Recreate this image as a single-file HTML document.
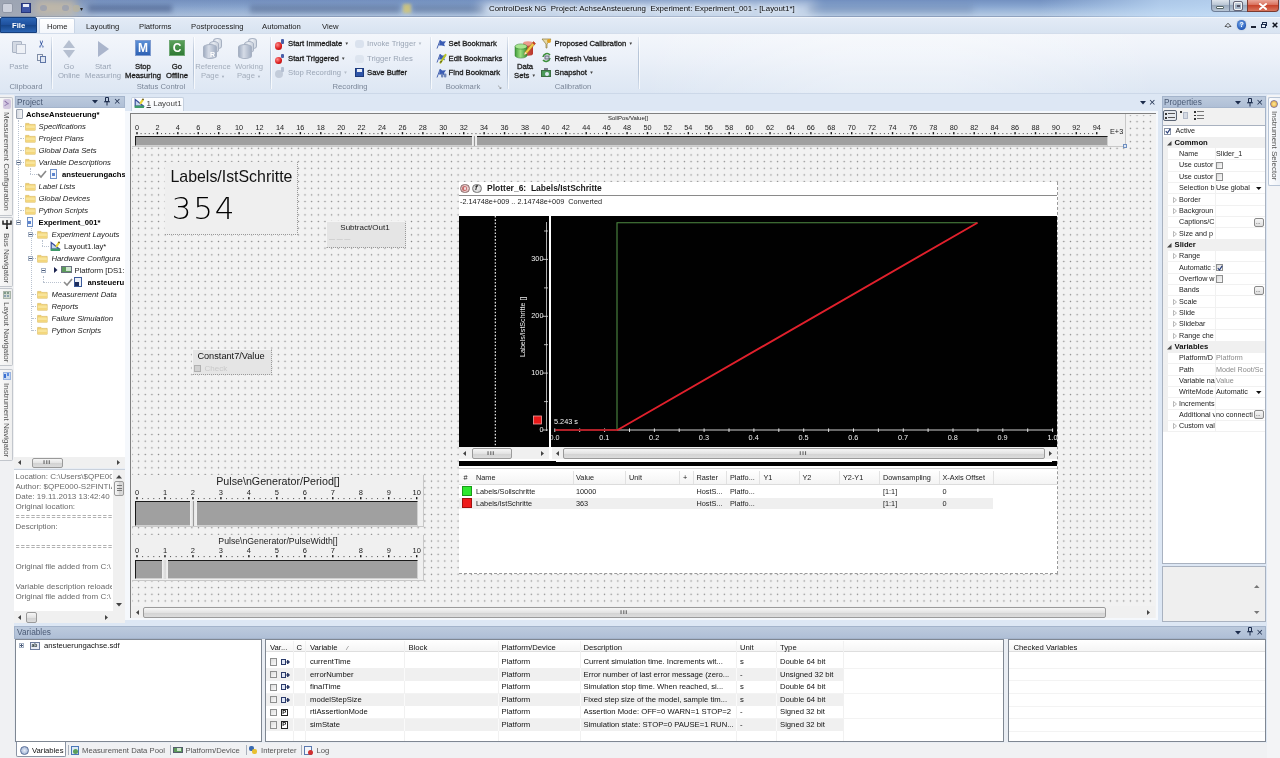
<!DOCTYPE html>
<html><head><meta charset="utf-8"><title>ControlDesk NG</title>
<style>
html,body{margin:0;padding:0;}
body{width:1280px;height:758px;overflow:hidden;position:relative;background:#dfe9f5;font-family:"Liberation Sans",sans-serif;font-size:8px;color:#1e1e1e;}
div{position:absolute;box-sizing:border-box;}
.t{white-space:nowrap;line-height:10px;font-size:8px;}
.g{color:#9aa3ad;}
.b{font-weight:bold;}
.i{font-style:italic;}
svg{position:absolute;overflow:visible;}
</style></head><body><div id="wrap" style="left:0;top:0;width:1280px;height:758px;will-change:transform;opacity:.999">
<div style="left:0px;top:0px;width:1280px;height:17px;background:linear-gradient(to bottom,#7391c1 0,#86a4cf 35%,#a3bcdc 70%,#bccfe6 100%);"></div>
<div style="left:0px;top:0px;width:700px;height:17px;background:linear-gradient(to right,rgba(160,166,178,.95) 0,rgba(160,166,178,.9) 30px,rgba(120,140,180,.25) 100px,rgba(120,140,180,.15) 300px,rgba(120,140,180,.05) 480px,rgba(120,140,180,0) 700px);"></div>
<div style="left:0px;top:15.6px;width:1280px;height:1.6px;background:rgba(110,128,160,.55);"></div>
<div style="left:36px;top:0px;width:40px;height:15px;background:rgba(206,190,160,.75);filter:blur(4px);"></div>
<div style="left:88px;top:5px;width:84px;height:7px;background:rgba(60,80,125,.55);filter:blur(2.5px);"></div>
<div style="left:250px;top:5px;width:150px;height:8px;background:rgba(70,90,130,.45);filter:blur(2.5px);"></div>
<div style="left:412px;top:5px;width:72px;height:8px;background:rgba(70,90,130,.40);filter:blur(2.5px);"></div>
<div style="left:403px;top:4px;width:8px;height:9px;background:rgba(215,200,110,.8);filter:blur(1.5px);"></div>
<div style="left:480px;top:2px;width:335px;height:13px;background:rgba(255,255,255,.55);filter:blur(6px);"></div>
<div style="left:808px;top:5px;width:165px;height:8px;background:rgba(90,110,150,.28);filter:blur(3px);"></div>
<div style="left:1040px;top:0px;width:240px;height:17px;background:linear-gradient(to right,rgba(196,222,248,0),rgba(196,222,248,.7) 50%,rgba(196,222,248,.85));"></div>
<div style="left:2px;top:3px;width:11px;height:10px;background:#d9dde6;border:1px solid #8d94a3;border-radius:2px;opacity:.8"></div>
<div style="left:21px;top:3px;width:10px;height:10px;background:#3f56a6;border:1px solid #26357a;"></div>
<div style="left:23px;top:4px;width:6px;height:3px;background:#e8ecf6;"></div>
<div style="left:40px;top:5px;width:7px;height:6px;background:#8d98b0;border-radius:3px;opacity:.6"></div>
<div style="left:62px;top:5px;width:7px;height:6px;background:#8d98b0;border-radius:3px;opacity:.6"></div>
<div style="left:73px;top:5px;width:7px;height:7px;background:#b9b49c;border-radius:3px;opacity:.7"></div>
<div class="t" style="left:80px;top:4px;font-size:6px;color:#222;">&#9662;</div>
<div class="t" style="left:489px;top:4px;font-size:7.9px;color:#0a0a0a;text-shadow:0 0 4px #fff,0 0 6px #fff;">ControlDesk NG&nbsp; Project: AchseAnsteuerung&nbsp; Experiment: Experiment_001 - [Layout1*]</div>
<div style="left:1210.5px;top:0px;width:19px;height:11.5px;background:linear-gradient(#dde4ec,#b9c5d3 45%,#9aaabd 50%,#b8c6d6);border:1px solid #6f7f98;border-top:none;border-radius:0 0 0 4px;"></div>
<div style="left:1228.5px;top:0px;width:19px;height:11.5px;background:linear-gradient(#dde4ec,#b9c5d3 45%,#9aaabd 50%,#b8c6d6);border:1px solid #6f7f98;border-top:none;"></div>
<div style="left:1246.5px;top:0px;width:32px;height:11.5px;background:linear-gradient(#e9a79a,#d9705c 45%,#c8442c 50%,#d8765e);border:1px solid #7a3a30;border-top:none;border-radius:0 0 4px 0;"></div>
<div style="left:1216px;top:5.5px;width:8px;height:3.5px;background:#fff;border:1px solid #566;border-radius:1px;"></div>
<div style="left:1234px;top:2px;width:8px;height:7.5px;border:1.6px solid #f4f4f4;outline:.8px solid #667;border-radius:1px;"></div>
<div style="left:1236.5px;top:4.7px;width:3px;height:2.5px;background:#556;"></div>
<svg style="left:1259px;top:2.5px" width="8" height="7"><path d="M1,1 L7,6 M7,1 L1,6" stroke="#fff" stroke-width="2" stroke-linecap="round"/></svg>
<div style="left:0px;top:17px;width:1280px;height:16px;background:linear-gradient(#e3ebf6,#d8e3f1);border-top:1px solid #f2f6fb;"></div>
<div style="left:0px;top:17px;width:37px;height:16px;background:linear-gradient(#2d67b7,#1d4f9c 50%,#174589 51%,#2a64b4);border:1px solid #163f7d;border-radius:2px 2px 0 0;"></div>
<div class="t" style="left:12px;top:20.7px;color:#fff;font-size:7.7px;font-weight:bold;">File</div>
<div style="left:39px;top:18px;width:36px;height:16px;background:linear-gradient(#fff,#f3f6fb);border:1px solid #c9d5e5;border-bottom:none;border-radius:2px 2px 0 0;"></div>
<div class="t" style="left:47px;top:21.8px;font-size:7.7px;color:#1c1c1c;">Home</div>
<div class="t" style="left:86px;top:21.8px;font-size:7.7px;color:#1c1c1c;">Layouting</div>
<div class="t" style="left:139px;top:21.8px;font-size:7.7px;color:#1c1c1c;">Platforms</div>
<div class="t" style="left:191px;top:21.8px;font-size:7.7px;color:#1c1c1c;">Postprocessing</div>
<div class="t" style="left:262px;top:21.8px;font-size:7.7px;color:#1c1c1c;">Automation</div>
<div class="t" style="left:322px;top:21.8px;font-size:7.7px;color:#1c1c1c;">View</div>
<svg style="left:1223.5px;top:21.5px" width="8" height="6"><path d="M1,4.5 L4,1.2 L7,4.5 L5.2,4.5 L4,5.5 L2.8,4.5 Z" fill="none" stroke="#444" stroke-width=".9"/></svg>
<div style="left:1236.5px;top:20px;width:9.5px;height:9.5px;background:radial-gradient(circle at 45% 40%,#7fb0ee,#1f55b5 70%);border-radius:5px;box-shadow:0 0 1.5px #9ab;"></div>
<div class="t" style="left:1239.6px;top:19.7px;font-size:7px;color:#fff;font-weight:bold;">?</div>
<div style="left:1251px;top:26px;width:4.5px;height:1.6px;background:#1c2233;"></div>
<div style="left:1262px;top:21.5px;width:5px;height:4px;border:1px solid #1c2c4c;border-top-width:1.6px;"></div>
<div style="left:1260.5px;top:23.5px;width:5px;height:4.5px;border:1px solid #1c2c4c;border-top-width:1.6px;background:#e8eef7;"></div>
<svg style="left:1271.5px;top:21.5px" width="6" height="6"><path d="M.7,.7 L5.3,5.3 M5.3,.7 L.7,5.3" stroke="#10141f" stroke-width="1.5"/></svg>
<div style="left:0px;top:33px;width:1280px;height:61px;background:linear-gradient(to bottom,#f3f6fb 0,#ecf1f9 22px,#e2eaf5 45px,#dce6f3 61px);border-top:1px solid #d3ddeb;border-bottom:1px solid #ccd8e8;"></div>
<div style="left:640px;top:34px;width:520px;height:59px;background:linear-gradient(to right,rgba(255,255,255,0),rgba(255,255,255,.3) 40%,rgba(255,255,255,.3) 60%,rgba(255,255,255,0));"></div>
<div style="left:51px;top:37px;width:1px;height:52px;background:linear-gradient(rgba(170,185,205,.2),#b7c5d8 30%,#b7c5d8 70%,rgba(170,185,205,.2));"></div>
<div style="left:52px;top:37px;width:1px;height:52px;background:rgba(255,255,255,.7);"></div>
<div style="left:193px;top:37px;width:1px;height:52px;background:linear-gradient(rgba(170,185,205,.2),#b7c5d8 30%,#b7c5d8 70%,rgba(170,185,205,.2));"></div>
<div style="left:194px;top:37px;width:1px;height:52px;background:rgba(255,255,255,.7);"></div>
<div style="left:269.5px;top:37px;width:1px;height:52px;background:linear-gradient(rgba(170,185,205,.2),#b7c5d8 30%,#b7c5d8 70%,rgba(170,185,205,.2));"></div>
<div style="left:270.5px;top:37px;width:1px;height:52px;background:rgba(255,255,255,.7);"></div>
<div style="left:429.5px;top:37px;width:1px;height:52px;background:linear-gradient(rgba(170,185,205,.2),#b7c5d8 30%,#b7c5d8 70%,rgba(170,185,205,.2));"></div>
<div style="left:430.5px;top:37px;width:1px;height:52px;background:rgba(255,255,255,.7);"></div>
<div style="left:507px;top:37px;width:1px;height:52px;background:linear-gradient(rgba(170,185,205,.2),#b7c5d8 30%,#b7c5d8 70%,rgba(170,185,205,.2));"></div>
<div style="left:508px;top:37px;width:1px;height:52px;background:rgba(255,255,255,.7);"></div>
<div style="left:637.5px;top:37px;width:1px;height:52px;background:linear-gradient(rgba(170,185,205,.2),#b7c5d8 30%,#b7c5d8 70%,rgba(170,185,205,.2));"></div>
<div style="left:638.5px;top:37px;width:1px;height:52px;background:rgba(255,255,255,.7);"></div>
<div class="t" style="left:-14px;top:81.7px;width:80px;text-align:center;color:#7b8799;font-size:7.7px;">Clipboard</div>
<div class="t" style="left:121px;top:81.7px;width:80px;text-align:center;color:#7b8799;font-size:7.7px;">Status Control</div>
<div class="t" style="left:310px;top:81.7px;width:80px;text-align:center;color:#7b8799;font-size:7.7px;">Recording</div>
<div class="t" style="left:423px;top:81.7px;width:80px;text-align:center;color:#7b8799;font-size:7.7px;">Bookmark</div>
<div class="t" style="left:533px;top:81.7px;width:80px;text-align:center;color:#7b8799;font-size:7.7px;">Calibration</div>
<div class="t" style="left:497px;top:82px;font-size:6px;color:#777;">&#8600;</div>
<div style="left:12px;top:41px;width:10px;height:12px;background:#d3d9e3;border:1px solid #a9b3c3;border-radius:1px;"></div>
<div style="left:16px;top:44px;width:10px;height:10px;background:#eef1f6;border:1px solid #b4bccb;"></div>
<div class="t" style="left:0px;top:61.5px;width:38px;text-align:center;color:#9aa5b5;font-size:7.7px;">Paste</div>
<div class="t" style="left:36.5px;top:37.5px;font-size:10px;color:#2a4d9b;transform:rotate(-90deg);line-height:11px;">&#9986;</div>
<div style="left:37px;top:54px;width:6px;height:7px;background:#eef1f6;border:1px solid #7f8da6;"></div>
<div style="left:40px;top:56px;width:6px;height:7px;background:#dfe6f2;border:1px solid #5f76a6;"></div>
<div class="t" style="left:39px;top:61.5px;width:60px;text-align:center;color:#9aa5b5;font-size:7.7px;">Go</div>
<div class="t" style="left:39px;top:70.5px;width:60px;text-align:center;color:#9aa5b5;font-size:7.7px;">Online</div>
<svg style="left:62px;top:39px" width="14" height="20"><polygon points="7,1 13,9 1,9" fill="#b5bfd0"/><polygon points="7,19 13,11 1,11" fill="#b5bfd0"/></svg>
<div class="t" style="left:73px;top:61.5px;width:60px;text-align:center;color:#9aa5b5;font-size:7.7px;">Start</div>
<div class="t" style="left:73px;top:70.5px;width:60px;text-align:center;color:#9aa5b5;font-size:7.7px;">Measuring</div>
<svg style="left:97px;top:40px" width="14" height="18"><polygon points="1,1 12,9 1,17" fill="#aab5cc"/></svg>
<div class="t" style="left:113px;top:61.5px;width:60px;text-align:center;color:#1c1c1c;font-size:7.7px;-webkit-text-stroke:.3px #1c1c1c;">Stop</div>
<div class="t" style="left:113px;top:70.5px;width:60px;text-align:center;color:#1c1c1c;font-size:7.7px;-webkit-text-stroke:.3px #1c1c1c;">Measuring</div>
<div style="left:135px;top:40px;width:16px;height:16px;background:linear-gradient(#5b8fd6,#2f62b4);border:1px solid #7f9cd0;"></div>
<div class="t" style="left:135px;top:41px;width:16px;text-align:center;color:#fff;font-weight:bold;font-size:12px;line-height:14px;">M</div>
<div class="t" style="left:147px;top:61.5px;width:60px;text-align:center;color:#1c1c1c;font-size:7.7px;-webkit-text-stroke:.3px #1c1c1c;">Go</div>
<div class="t" style="left:147px;top:70.5px;width:60px;text-align:center;color:#1c1c1c;font-size:7.7px;-webkit-text-stroke:.3px #1c1c1c;">Offline</div>
<div style="left:169px;top:40px;width:16px;height:16px;background:linear-gradient(#5aa05a,#2f7a35);border:1px solid #6fa874;"></div>
<div class="t" style="left:169px;top:41px;width:16px;text-align:center;color:#fff;font-weight:bold;font-size:12px;line-height:14px;">C</div>
<div style="left:213px;top:38px;width:9px;height:11px;background:linear-gradient(to right,#cfd6e1,#eef1f6 40%,#cfd6e1);border:1px solid #a7b1c2;border-radius:4.5px/3px;"></div>
<div style="left:209px;top:41px;width:10px;height:12px;background:linear-gradient(to right,#c9d0dc,#e9edf3 40%,#c9d0dc);border:1px solid #a7b1c2;border-radius:5.0px/3px;"></div>
<div style="left:203px;top:43.5px;width:14px;height:15px;background:linear-gradient(to right,#a3afc3,#d6dce7 40%,#a3afc3);border:1px solid #a7b1c2;border-radius:7.0px/3px;"></div>
<div style="left:248px;top:38px;width:9px;height:11px;background:linear-gradient(to right,#cfd6e1,#eef1f6 40%,#cfd6e1);border:1px solid #a7b1c2;border-radius:4.5px/3px;"></div>
<div style="left:244px;top:41px;width:10px;height:12px;background:linear-gradient(to right,#c9d0dc,#e9edf3 40%,#c9d0dc);border:1px solid #a7b1c2;border-radius:5.0px/3px;"></div>
<div style="left:238px;top:43.5px;width:14px;height:15px;background:linear-gradient(to right,#a3afc3,#d6dce7 40%,#a3afc3);border:1px solid #a7b1c2;border-radius:7.0px/3px;"></div>
<div class="t" style="left:210px;top:50px;font-size:7px;font-weight:bold;color:#fff;">R</div>
<div class="t" style="left:183px;top:61.5px;width:60px;text-align:center;color:#a3adbb;font-size:7.7px;">Reference</div>
<div class="t" style="left:183px;top:70.5px;width:60px;text-align:center;color:#a3adbb;font-size:7.7px;">Page <span style="font-size:4px;">&#9660;</span></div>
<div class="t" style="left:219px;top:61.5px;width:60px;text-align:center;color:#a3adbb;font-size:7.7px;">Working</div>
<div class="t" style="left:219px;top:70.5px;width:60px;text-align:center;color:#a3adbb;font-size:7.7px;">Page <span style="font-size:4px;">&#9660;</span></div>
<div style="left:274.5px;top:42px;width:7.5px;height:7.5px;background:radial-gradient(circle at 35% 35%,#ff8a8a,#d81818 60%,#9c1010);border-radius:4px;"></div>
<div style="left:281px;top:39px;width:2.5px;height:4.5px;background:#4a5fa8;border-radius:1px;"></div>
<div style="left:274.5px;top:56.5px;width:7.5px;height:7.5px;background:radial-gradient(circle at 35% 35%,#ff8a8a,#d81818 60%,#9c1010);border-radius:4px;"></div>
<div style="left:281px;top:53.5px;width:2.5px;height:4.5px;background:#4a5fa8;border-radius:1px;"></div>
<div style="left:275px;top:70px;width:8px;height:8px;background:#c3ccda;border-radius:4px;"></div>
<div style="left:281px;top:67px;width:3px;height:5px;background:#b4bfd2;border-radius:1px;"></div>
<div class="t" style="left:288px;top:39px;color:#1c1c1c;font-size:7.7px;-webkit-text-stroke:.3px #1c1c1c;">Start Immediate <span style="font-size:4.5px;color:#444;vertical-align:1px;-webkit-text-stroke:0">&#9660;</span></div>
<div class="t" style="left:288px;top:53.5px;color:#1c1c1c;font-size:7.7px;-webkit-text-stroke:.3px #1c1c1c;">Start Triggered <span style="font-size:4.5px;color:#444;vertical-align:1px;-webkit-text-stroke:0">&#9660;</span></div>
<div class="t" style="left:288px;top:68px;color:#9aa5b5;font-size:7.7px;">Stop Recording <span style="font-size:4.5px;color:#b5bdc9;vertical-align:1px;-webkit-text-stroke:0">&#9660;</span></div>
<div style="left:355px;top:40px;width:9px;height:8px;background:#c9d3e3;border-radius:3px;opacity:.55"></div>
<div style="left:355px;top:54.5px;width:9px;height:8px;background:#d2dae8;border-radius:3px;opacity:.55"></div>
<div style="left:355px;top:68px;width:9px;height:9px;background:#2f55a8;border:1px solid #1d3a7c;"></div>
<div style="left:357px;top:69px;width:5px;height:3px;background:#e8edf7;"></div>
<div class="t" style="left:367px;top:39px;color:#9aa5b5;font-size:7.7px;">Invoke Trigger <span style="font-size:4.5px;color:#b5bdc9;vertical-align:1px;-webkit-text-stroke:0">&#9660;</span></div>
<div class="t" style="left:367px;top:53.5px;color:#9aa5b5;font-size:7.7px;">Trigger Rules</div>
<div class="t" style="left:367px;top:68px;color:#1c1c1c;font-size:7.7px;-webkit-text-stroke:.3px #1c1c1c;">Save Buffer</div>
<svg style="left:435.5px;top:38.5px" width="11" height="10"><path d="M1,9.5 L4.2,1" stroke="#4a66b0" stroke-width="1" fill="none"/><path d="M4.2,1 L6.2,2.6 L10,2.2 L8,5 L9,7.2 L5.6,6.4 L3,6.6 Z" fill="#3a5cb4"/></svg>
<svg style="left:435.5px;top:53.0px" width="11" height="10"><path d="M1,9.5 L4.2,1" stroke="#4a66b0" stroke-width="1" fill="none"/><path d="M4.2,1 L6.2,2.6 L10,2.2 L8,5 L9,7.2 L5.6,6.4 L3,6.6 Z" fill="#3a5cb4"/><path d="M4.5,9.5 L9.5,2" stroke="#b7c22a" stroke-width="2.2" stroke-linecap="round"/><path d="M4.5,9.5 L5.5,8" stroke="#4a4a2a" stroke-width="1.2"/></svg>
<svg style="left:435.5px;top:67.5px" width="11" height="10"><path d="M1,9.5 L4.2,1" stroke="#4a66b0" stroke-width="1" fill="none"/><path d="M4.2,1 L6.2,2.6 L10,2.2 L8,5 L9,7.2 L5.6,6.4 L3,6.6 Z" fill="#3a5cb4"/><rect x="5" y="5.5" width="2.4" height="4" rx="1" fill="#6f86b8"/><rect x="8" y="5.5" width="2.4" height="4" rx="1" fill="#6f86b8"/></svg>
<div class="t" style="left:448.5px;top:39px;color:#1c1c1c;font-size:7.7px;-webkit-text-stroke:.3px #1c1c1c;">Set Bookmark</div>
<div class="t" style="left:448.5px;top:53.5px;color:#1c1c1c;font-size:7.7px;-webkit-text-stroke:.3px #1c1c1c;">Edit Bookmarks</div>
<div class="t" style="left:448.5px;top:68px;color:#1c1c1c;font-size:7.7px;-webkit-text-stroke:.3px #1c1c1c;">Find Bookmark</div>
<svg style="left:514px;top:39px" width="23" height="20"><defs><linearGradient id="gcy" x1="0" x2="1"><stop offset="0" stop-color="#3f9a3a"/><stop offset=".45" stop-color="#9be07e"/><stop offset="1" stop-color="#3a8a36"/></linearGradient><linearGradient id="rcy" x1="0" x2="1"><stop offset="0" stop-color="#d96a5a"/><stop offset="1" stop-color="#b8352a"/></linearGradient></defs><path d="M9,4.5 v10 a5,2.2 0 0 0 10,0 v-10 z" fill="url(#rcy)"/><ellipse cx="14" cy="4.5" rx="5" ry="2.2" fill="#eb9a8c"/><path d="M1,7.5 v9 a6,2.6 0 0 0 12,0 v-9 z" fill="url(#gcy)" stroke="#2f7a2c" stroke-width=".5"/><ellipse cx="7" cy="7.5" rx="6" ry="2.6" fill="#a8e690" stroke="#2f7a2c" stroke-width=".5"/><path d="M19.5,2.5 L21.5,4.5 L13,14.5 L10.3,15.8 L11,13 Z" fill="#f0c848" stroke="#9a7418" stroke-width=".5"/><path d="M19.5,2.5 L21.5,4.5 L20.3,6 L18.3,4 Z" fill="#c8382c"/><path d="M10.3,15.8 L11,13 L13,14.5 Z" fill="#f6ead0"/></svg>
<div class="t" style="left:505px;top:61.5px;width:40px;text-align:center;font-size:7.7px;-webkit-text-stroke:.3px #1c1c1c;">Data</div>
<div class="t" style="left:505px;top:70.5px;width:40px;text-align:center;font-size:7.7px;-webkit-text-stroke:.3px #1c1c1c;">Sets <span style="font-size:4.5px;color:#444;vertical-align:1px;-webkit-text-stroke:0">&#9660;</span></div>
<svg style="left:541px;top:38px" width="11" height="11"><polygon points="1,1 10,1 6,6 6,10 5,10 5,6" fill="#e5d9a4" stroke="#8c7a3a" stroke-width=".7"/><circle cx="8" cy="3" r="2" fill="#e0a020"/></svg>
<svg style="left:541px;top:52px" width="11" height="11"><path d="M2,5 A4,4 0 0 1 9,3 M9,6 A4,4 0 0 1 2,8" stroke="#3b8f3b" stroke-width="1.6" fill="none"/><rect x="4" y="4" width="4" height="3" fill="#c9d3e2" stroke="#667"/></svg>
<div style="left:541px;top:70px;width:10px;height:7px;background:#4a9a58;border:1px solid #3b6e43;"></div>
<div style="left:544px;top:68px;width:4px;height:2px;background:#778;"></div>
<div style="left:544.5px;top:71.5px;width:4px;height:4px;background:#dfe8f5;border-radius:2px;"></div>
<div class="t" style="left:554.5px;top:39px;color:#1c1c1c;font-size:7.7px;-webkit-text-stroke:.3px #1c1c1c;">Proposed Calibration <span style="font-size:4.5px;color:#444;vertical-align:1px;-webkit-text-stroke:0">&#9660;</span></div>
<div class="t" style="left:554.5px;top:53.5px;color:#1c1c1c;font-size:7.7px;-webkit-text-stroke:.3px #1c1c1c;">Refresh Values</div>
<div class="t" style="left:554.5px;top:68px;color:#1c1c1c;font-size:7.7px;-webkit-text-stroke:.3px #1c1c1c;">Snapshot <span style="font-size:4.5px;color:#444;vertical-align:1px;-webkit-text-stroke:0">&#9660;</span></div>
<div style="left:0px;top:94px;width:1280px;height:664px;background:#dde7f4;"></div>
<div style="left:0px;top:95px;width:14px;height:663px;background:#f0f1f3;"></div>
<div style="left:0px;top:97px;width:13px;height:119px;background:linear-gradient(to right,#f8f8f8,#efefef);border:1px solid #c2c6cc;border-left:none;border-radius:0 2px 2px 0;"></div>
<div class="t" style="left:11px;top:112px;transform-origin:0 0;transform:rotate(90deg);color:#555;font-size:8px;">Measurement Configuration</div>
<div style="left:2.5px;top:99px;width:8px;height:10px;background:#cdbfdc;border-radius:2px;opacity:.85;"></div><div style="left:4px;top:102px;width:5px;height:1px;background:#8a70a8;transform:rotate(40deg);"></div><div style="left:4px;top:104px;width:5px;height:1px;background:#9a86b8;transform:rotate(-35deg);"></div>
<div style="left:0px;top:217px;width:13px;height:70px;background:linear-gradient(to right,#f8f8f8,#efefef);border:1px solid #c2c6cc;border-left:none;border-radius:0 2px 2px 0;"></div>
<div class="t" style="left:11px;top:233px;transform-origin:0 0;transform:rotate(90deg);color:#555;font-size:8px;">Bus Navigator</div>
<svg style="left:2px;top:219px" width="10" height="10"><path d="M1,1.5 V5 H9 V1.5 M5,1 V5 M5,5 V8.5" stroke="#222" stroke-width="1.5" fill="none"/><rect x="4" y="8" width="2" height="2" fill="#222"/></svg>
<div style="left:0px;top:288px;width:13px;height:78px;background:linear-gradient(to right,#f8f8f8,#efefef);border:1px solid #c2c6cc;border-left:none;border-radius:0 2px 2px 0;"></div>
<div class="t" style="left:11px;top:302px;transform-origin:0 0;transform:rotate(90deg);color:#555;font-size:8px;">Layout Navigator</div>
<div style="left:2.5px;top:290.5px;width:8px;height:8px;background:#cfd8cf;border:1px solid #a9b5a9;"></div><div style="left:4px;top:292px;width:2px;height:2px;background:#7f9a8a;"></div><div style="left:7px;top:292px;width:2px;height:2px;background:#7f9a8a;"></div><div style="left:4px;top:295px;width:2px;height:2px;background:#8aa0b0;"></div><div style="left:7px;top:295px;width:2px;height:2px;background:#8aa0b0;"></div>
<div style="left:0px;top:369px;width:13px;height:92px;background:linear-gradient(to right,#f8f8f8,#efefef);border:1px solid #c2c6cc;border-left:none;border-radius:0 2px 2px 0;"></div>
<div class="t" style="left:11px;top:383px;transform-origin:0 0;transform:rotate(90deg);color:#555;font-size:8px;">Instrument Navigator</div>
<div style="left:2.5px;top:372px;width:8px;height:8px;background:#c9daf2;border:1px solid #9ab4e0;"></div><div style="left:4px;top:374px;width:2px;height:4px;background:#3b6fd0;"></div><div style="left:7px;top:373px;width:2px;height:3px;background:#5a8ae0;"></div>
<div style="left:14.5px;top:96.3px;width:110px;height:11.7px;background:linear-gradient(#bccadd,#afbfd6);border:1px solid #a4b4cb;"></div>
<div class="t" style="left:17px;top:97.2px;font-size:8.3px;color:#4a5a75;">Project</div>
<svg style="left:92px;top:100px" width="7" height="4"><polygon points="0,0 6,0 3,3.5" fill="#1c2c4c"/></svg>
<svg style="left:104px;top:97px" width="6" height="9"><path d="M1.5,0.5 h3 v4 h-3 z M0,4.8 h6 M3,5 v3.5" stroke="#1c2c4c" fill="none" stroke-width="1"/></svg>
<div class="t" style="left:114px;top:95px;font-size:11px;color:#1c2c4c;line-height:12px;">&#215;</div>
<div style="left:14px;top:108px;width:111px;height:349px;background:#fff;"></div>
<div style="left:18px;top:120px;width:1px;height:102px;border-left:1px dotted #b9c2cf;"></div>
<div style="left:30.5px;top:228px;width:1px;height:103px;border-left:1px dotted #b9c2cf;"></div>
<div class="t" style="left:26px;top:109.6px;font-weight:bold;color:#000;font-size:7.7px;width:99px;overflow:hidden;">AchseAnsteuerung*</div>
<div style="left:16px;top:109px;width:7px;height:10px;background:linear-gradient(to right,#d5d9e0,#f4f5f7);border:1px solid #9aa2b0;border-radius:1px;"></div>
<div class="t" style="left:38.5px;top:121.6px;font-style:italic;color:#222;font-size:7.7px;width:86.5px;overflow:hidden;">Specifications</div>
<svg style="left:24.5px;top:121.5px" width="11" height="9"><path d="M.6,1.4 h3.4 l1,1 h5.2 v5.8 h-9.6 z" fill="#f0cf6e" stroke="#d8b75a" stroke-width=".6"/><path d="M.9,3.4 h9 v4.5 h-9 z" fill="#f8e49a"/><path d="M.9,6 h9 v1.9 h-9 z" fill="#f3d67c"/></svg>
<div style="left:19.5px;top:126px;width:4px;height:1px;border-top:1px dotted #b9c2cf;"></div>
<div class="t" style="left:38.5px;top:133.6px;font-style:italic;color:#222;font-size:7.7px;width:86.5px;overflow:hidden;">Project Plans</div>
<svg style="left:24.5px;top:133.5px" width="11" height="9"><path d="M.6,1.4 h3.4 l1,1 h5.2 v5.8 h-9.6 z" fill="#f0cf6e" stroke="#d8b75a" stroke-width=".6"/><path d="M.9,3.4 h9 v4.5 h-9 z" fill="#f8e49a"/><path d="M.9,6 h9 v1.9 h-9 z" fill="#f3d67c"/></svg>
<div style="left:19.5px;top:138px;width:4px;height:1px;border-top:1px dotted #b9c2cf;"></div>
<div class="t" style="left:38.5px;top:145.6px;font-style:italic;color:#222;font-size:7.7px;width:86.5px;overflow:hidden;">Global Data Sets</div>
<svg style="left:24.5px;top:145.5px" width="11" height="9"><path d="M.6,1.4 h3.4 l1,1 h5.2 v5.8 h-9.6 z" fill="#f0cf6e" stroke="#d8b75a" stroke-width=".6"/><path d="M.9,3.4 h9 v4.5 h-9 z" fill="#f8e49a"/><path d="M.9,6 h9 v1.9 h-9 z" fill="#f3d67c"/></svg>
<div style="left:19.5px;top:150px;width:4px;height:1px;border-top:1px dotted #b9c2cf;"></div>
<div class="t" style="left:38.5px;top:157.6px;font-style:italic;color:#222;font-size:7.7px;width:86.5px;overflow:hidden;">Variable Descriptions</div>
<svg style="left:24.5px;top:157.5px" width="11" height="9"><path d="M.6,1.4 h3.4 l1,1 h5.2 v5.8 h-9.6 z" fill="#f0cf6e" stroke="#d8b75a" stroke-width=".6"/><path d="M.9,3.4 h9 v4.5 h-9 z" fill="#f8e49a"/><path d="M.9,6 h9 v1.9 h-9 z" fill="#f3d67c"/></svg>
<div style="left:19.5px;top:162px;width:4px;height:1px;border-top:1px dotted #b9c2cf;"></div>
<div style="left:15.5px;top:159.5px;width:5px;height:5px;border:1px solid #a6b2c4;background:#fff;"></div><div style="left:16.5px;top:161.5px;width:3px;height:1px;background:#4a5a78;"></div>
<div class="t" style="left:62px;top:169.6px;font-weight:bold;color:#000;font-size:7.7px;width:63px;overflow:hidden;">ansteuerungachs</div>
<svg style="left:37px;top:170px" width="10" height="8"><path d="M1,4 L4,7 L9,1" stroke="#8a8a8a" stroke-width="1.6" fill="none"/></svg>
<div style="left:50px;top:169px;width:7px;height:10px;background:#f4f7fc;border:1px solid #6f8fc6;"></div>
<div style="left:52px;top:173px;width:3px;height:3px;background:#5b84cf;"></div>
<div style="left:30px;top:168px;width:1px;height:6px;border-left:1px dotted #b9c2cf;"></div><div style="left:30px;top:174px;width:7px;height:1px;border-top:1px dotted #b9c2cf;"></div>
<div class="t" style="left:38.5px;top:181.6px;font-style:italic;color:#222;font-size:7.7px;width:86.5px;overflow:hidden;">Label Lists</div>
<svg style="left:24.5px;top:181.5px" width="11" height="9"><path d="M.6,1.4 h3.4 l1,1 h5.2 v5.8 h-9.6 z" fill="#f0cf6e" stroke="#d8b75a" stroke-width=".6"/><path d="M.9,3.4 h9 v4.5 h-9 z" fill="#f8e49a"/><path d="M.9,6 h9 v1.9 h-9 z" fill="#f3d67c"/></svg>
<div style="left:19.5px;top:186px;width:4px;height:1px;border-top:1px dotted #b9c2cf;"></div>
<div class="t" style="left:38.5px;top:193.6px;font-style:italic;color:#222;font-size:7.7px;width:86.5px;overflow:hidden;">Global Devices</div>
<svg style="left:24.5px;top:193.5px" width="11" height="9"><path d="M.6,1.4 h3.4 l1,1 h5.2 v5.8 h-9.6 z" fill="#f0cf6e" stroke="#d8b75a" stroke-width=".6"/><path d="M.9,3.4 h9 v4.5 h-9 z" fill="#f8e49a"/><path d="M.9,6 h9 v1.9 h-9 z" fill="#f3d67c"/></svg>
<div style="left:19.5px;top:198px;width:4px;height:1px;border-top:1px dotted #b9c2cf;"></div>
<div class="t" style="left:38.5px;top:205.6px;font-style:italic;color:#222;font-size:7.7px;width:86.5px;overflow:hidden;">Python Scripts</div>
<svg style="left:24.5px;top:205.5px" width="11" height="9"><path d="M.6,1.4 h3.4 l1,1 h5.2 v5.8 h-9.6 z" fill="#f0cf6e" stroke="#d8b75a" stroke-width=".6"/><path d="M.9,3.4 h9 v4.5 h-9 z" fill="#f8e49a"/><path d="M.9,6 h9 v1.9 h-9 z" fill="#f3d67c"/></svg>
<div style="left:19.5px;top:210px;width:4px;height:1px;border-top:1px dotted #b9c2cf;"></div>
<div class="t" style="left:38.5px;top:217.6px;font-weight:bold;color:#000;font-size:7.7px;width:86.5px;overflow:hidden;">Experiment_001*</div>
<div style="left:15.5px;top:219.5px;width:5px;height:5px;border:1px solid #a6b2c4;background:#fff;"></div><div style="left:16.5px;top:221.5px;width:3px;height:1px;background:#4a5a78;"></div>
<div style="left:26.5px;top:217px;width:6px;height:10px;background:#f4f7fc;border:1px solid #6f8fc6;"></div>
<div style="left:28px;top:221px;width:3px;height:3px;background:#5b84cf;"></div>
<div class="t" style="left:51.5px;top:229.6px;font-style:italic;color:#222;font-size:7.7px;width:73.5px;overflow:hidden;">Experiment Layouts</div>
<svg style="left:37px;top:229.5px" width="11" height="9"><path d="M.6,1.4 h3.4 l1,1 h5.2 v5.8 h-9.6 z" fill="#f0cf6e" stroke="#d8b75a" stroke-width=".6"/><path d="M.9,3.4 h9 v4.5 h-9 z" fill="#f8e49a"/><path d="M.9,6 h9 v1.9 h-9 z" fill="#f3d67c"/></svg>
<div style="left:32px;top:234px;width:4px;height:1px;border-top:1px dotted #b9c2cf;"></div>
<div style="left:28px;top:231.5px;width:5px;height:5px;border:1px solid #a6b2c4;background:#fff;"></div><div style="left:29px;top:233.5px;width:3px;height:1px;background:#4a5a78;"></div>
<div class="t" style="left:64px;top:241.6px;color:#222;font-size:7.7px;width:61px;overflow:hidden;">Layout1.lay*</div>
<svg style="left:50px;top:241px" width="11" height="10"><polygon points="1.2,1.6 1.2,8 9.3,8" fill="#c4d6ee" stroke="#3a4f9a" stroke-width="1.2"/><rect x=".6" y="7.6" width="9.4" height="2.4" fill="#3f9a6a"/><path d="M6.6,5.2 L8.8,1.8" stroke="#ecd63a" stroke-width="2.2" stroke-linecap="round"/><circle cx="9" cy="1.4" r=".8" fill="#5a4a1a"/></svg>
<div style="left:42px;top:240px;width:1px;height:6px;border-left:1px dotted #b9c2cf;"></div><div style="left:42px;top:246px;width:7px;height:1px;border-top:1px dotted #b9c2cf;"></div>
<div class="t" style="left:51.5px;top:253.6px;font-style:italic;color:#222;font-size:7.7px;width:73.5px;overflow:hidden;">Hardware Configura</div>
<svg style="left:37px;top:253.5px" width="11" height="9"><path d="M.6,1.4 h3.4 l1,1 h5.2 v5.8 h-9.6 z" fill="#f0cf6e" stroke="#d8b75a" stroke-width=".6"/><path d="M.9,3.4 h9 v4.5 h-9 z" fill="#f8e49a"/><path d="M.9,6 h9 v1.9 h-9 z" fill="#f3d67c"/></svg>
<div style="left:32px;top:258px;width:4px;height:1px;border-top:1px dotted #b9c2cf;"></div>
<div style="left:28px;top:255.5px;width:5px;height:5px;border:1px solid #a6b2c4;background:#fff;"></div><div style="left:29px;top:257.5px;width:3px;height:1px;background:#4a5a78;"></div>
<div class="t" style="left:74.5px;top:265.6px;color:#222;font-size:7.7px;width:50.5px;overflow:hidden;">Platform [DS1:</div>
<div style="left:41px;top:267.5px;width:5px;height:5px;border:1px solid #a6b2c4;background:#fff;"></div><div style="left:42px;top:269.5px;width:3px;height:1px;background:#4a5a78;"></div>
<svg style="left:54px;top:267px" width="4" height="6"><polygon points="0,0 3.5,3 0,6" fill="#1c2450"/></svg>
<div style="left:61px;top:266px;width:11px;height:7px;background:#5d9a5d;border:1px solid #6b7280;"></div>
<div style="left:66px;top:267px;width:5px;height:4px;background:#cfe6cf;"></div>
<div class="t" style="left:87.5px;top:277.6px;font-weight:bold;color:#000;font-size:7.7px;width:37.5px;overflow:hidden;">ansteueru</div>
<svg style="left:63px;top:278px" width="10" height="8"><path d="M1,4 L4,7 L9,1" stroke="#8a8a8a" stroke-width="1.6" fill="none"/></svg>
<div style="left:74px;top:277px;width:8px;height:10px;background:#eef2f9;border:1px solid #3b5a9a;"></div>
<div style="left:75px;top:282px;width:4px;height:4px;background:#1d2d5c;"></div>
<div style="left:43px;top:276px;width:1px;height:6px;border-left:1px dotted #b9c2cf;"></div><div style="left:43px;top:282px;width:18px;height:1px;border-top:1px dotted #b9c2cf;"></div>
<div class="t" style="left:51.5px;top:289.6px;font-style:italic;color:#222;font-size:7.7px;width:73.5px;overflow:hidden;">Measurement Data</div>
<svg style="left:37px;top:289.5px" width="11" height="9"><path d="M.6,1.4 h3.4 l1,1 h5.2 v5.8 h-9.6 z" fill="#f0cf6e" stroke="#d8b75a" stroke-width=".6"/><path d="M.9,3.4 h9 v4.5 h-9 z" fill="#f8e49a"/><path d="M.9,6 h9 v1.9 h-9 z" fill="#f3d67c"/></svg>
<div style="left:32px;top:294px;width:4px;height:1px;border-top:1px dotted #b9c2cf;"></div>
<div class="t" style="left:51.5px;top:301.6px;font-style:italic;color:#222;font-size:7.7px;width:73.5px;overflow:hidden;">Reports</div>
<svg style="left:37px;top:301.5px" width="11" height="9"><path d="M.6,1.4 h3.4 l1,1 h5.2 v5.8 h-9.6 z" fill="#f0cf6e" stroke="#d8b75a" stroke-width=".6"/><path d="M.9,3.4 h9 v4.5 h-9 z" fill="#f8e49a"/><path d="M.9,6 h9 v1.9 h-9 z" fill="#f3d67c"/></svg>
<div style="left:32px;top:306px;width:4px;height:1px;border-top:1px dotted #b9c2cf;"></div>
<div class="t" style="left:51.5px;top:313.6px;font-style:italic;color:#222;font-size:7.7px;width:73.5px;overflow:hidden;">Failure Simulation</div>
<svg style="left:37px;top:313.5px" width="11" height="9"><path d="M.6,1.4 h3.4 l1,1 h5.2 v5.8 h-9.6 z" fill="#f0cf6e" stroke="#d8b75a" stroke-width=".6"/><path d="M.9,3.4 h9 v4.5 h-9 z" fill="#f8e49a"/><path d="M.9,6 h9 v1.9 h-9 z" fill="#f3d67c"/></svg>
<div style="left:32px;top:318px;width:4px;height:1px;border-top:1px dotted #b9c2cf;"></div>
<div class="t" style="left:51.5px;top:325.6px;font-style:italic;color:#222;font-size:7.7px;width:73.5px;overflow:hidden;">Python Scripts</div>
<svg style="left:37px;top:325.5px" width="11" height="9"><path d="M.6,1.4 h3.4 l1,1 h5.2 v5.8 h-9.6 z" fill="#f0cf6e" stroke="#d8b75a" stroke-width=".6"/><path d="M.9,3.4 h9 v4.5 h-9 z" fill="#f8e49a"/><path d="M.9,6 h9 v1.9 h-9 z" fill="#f3d67c"/></svg>
<div style="left:32px;top:330px;width:4px;height:1px;border-top:1px dotted #b9c2cf;"></div>
<div style="left:14px;top:457px;width:111px;height:11px;background:#f0f0f0;"></div><div style="left:32px;top:457.5px;width:31px;height:10px;background:linear-gradient(#f6f6f6,#e3e3e3 50%,#d2d2d2 51%,#dcdcdc);border:1px solid #9a9a9a;border-radius:2px;"></div><div class="t" style="left:32px;top:456px;width:31px;text-align:center;font-size:3px;letter-spacing:.5px;color:#666;line-height:13px;">&#9612;&#9612;&#9612;</div><svg style="left:18px;top:460.0px" width="4" height="5"><polygon points="3,0 3,5 0,2.5" fill="#444"/></svg><svg style="left:117px;top:460.0px" width="4" height="5"><polygon points="0,0 0,5 3,2.5" fill="#444"/></svg>
<div style="left:14px;top:468px;width:111px;height:2px;background:#e8edf4;border-bottom:1px solid #c9d1dc;"></div>
<div style="left:14px;top:470px;width:99px;height:141px;background:#fff;"></div>
<div class="t" style="left:15.5px;top:472px;color:#6a6a6a;font-size:8px;width:96.5px;overflow:hidden;">Location: C:\Users\$QPE000</div>
<div class="t" style="left:15.5px;top:482px;color:#6a6a6a;font-size:8px;width:96.5px;overflow:hidden;">Author: $QPE000-S2FINTIA1</div>
<div class="t" style="left:15.5px;top:492px;color:#6a6a6a;font-size:8px;width:96.5px;overflow:hidden;">Date: 19.11.2013 13:42:40</div>
<div class="t" style="left:15.5px;top:502px;color:#6a6a6a;font-size:8px;width:96.5px;overflow:hidden;">Original location:</div>
<div class="t" style="left:15.5px;top:512px;color:#6a6a6a;font-size:8px;width:96.5px;overflow:hidden;letter-spacing:-.45px;font-size:7px;">= = = = = = = = = = = = = = = = = = =</div>
<div class="t" style="left:15.5px;top:522px;color:#6a6a6a;font-size:8px;width:96.5px;overflow:hidden;">Description:</div>
<div class="t" style="left:15.5px;top:542px;color:#6a6a6a;font-size:8px;width:96.5px;overflow:hidden;letter-spacing:-.45px;font-size:7px;">= = = = = = = = = = = = = = = = = = =</div>
<div class="t" style="left:15.5px;top:562px;color:#6a6a6a;font-size:8px;width:96.5px;overflow:hidden;">Original file added from C:\</div>
<div class="t" style="left:15.5px;top:582px;color:#6a6a6a;font-size:8px;width:96.5px;overflow:hidden;">Variable description reloade</div>
<div class="t" style="left:15.5px;top:592px;color:#6a6a6a;font-size:8px;width:96.5px;overflow:hidden;">Original file added from C:\</div>
<div style="left:113px;top:470px;width:12px;height:141px;background:#f0f0f0;"></div>
<div style="left:114px;top:481px;width:10px;height:15px;background:linear-gradient(to right,#f6f6f6,#e3e3e3 50%,#d2d2d2 51%,#dcdcdc);border:1px solid #9a9a9a;border-radius:2px;"></div>
<div style="left:116.5px;top:485px;width:5px;height:1px;background:#777;"></div><div style="left:116.5px;top:487.5px;width:5px;height:1px;background:#777;"></div><div style="left:116.5px;top:490px;width:5px;height:1px;background:#777;"></div>
<svg style="left:116px;top:475px" width="6" height="4"><polygon points="0,3.5 6,3.5 3,0" fill="#444"/></svg>
<svg style="left:116px;top:603px" width="6" height="4"><polygon points="0,0 6,0 3,3.5" fill="#444"/></svg>
<div style="left:14px;top:611px;width:99px;height:12px;background:#f0f0f0;"></div><div style="left:26px;top:611.5px;width:11px;height:11px;background:linear-gradient(#f6f6f6,#e3e3e3 50%,#d2d2d2 51%,#dcdcdc);border:1px solid #9a9a9a;border-radius:2px;"></div><svg style="left:18px;top:614.5px" width="4" height="5"><polygon points="3,0 3,5 0,2.5" fill="#444"/></svg><svg style="left:105px;top:614.5px" width="4" height="5"><polygon points="0,0 0,5 3,2.5" fill="#444"/></svg>
<div style="left:113px;top:611px;width:12px;height:12px;background:#f0f0f0;"></div>
<div style="left:131px;top:96.5px;width:52.5px;height:14.5px;background:linear-gradient(#fdfeff,#f5f8fc);border:1px solid #c6d1e0;border-bottom:none;border-radius:2px 2px 0 0;"></div>
<svg style="left:134px;top:98px" width="11" height="10"><polygon points="1.2,1.6 1.2,8 9.3,8" fill="#c4d6ee" stroke="#3a4f9a" stroke-width="1.2"/><rect x=".6" y="7.6" width="9.4" height="2.4" fill="#3f9a6a"/><path d="M6.6,5.2 L8.8,1.8" stroke="#ecd63a" stroke-width="2.2" stroke-linecap="round"/><circle cx="9" cy="1.4" r=".8" fill="#5a4a1a"/></svg>
<div class="t" style="left:146.5px;top:98.5px;font-size:8px;color:#444;"><u>1</u> Layout1</div>
<svg style="left:1140px;top:101px" width="7" height="4"><polygon points="0,0 6,0 3,3.5" fill="#1c2c4c"/></svg>
<div class="t" style="left:1149px;top:96px;font-size:11px;color:#1c2c4c;line-height:12px;">&#215;</div>
<div style="left:124.5px;top:110.7px;width:1033px;height:509px;background:#f5f8fc;"></div>
<div style="left:130.2px;top:113.3px;width:1025.5px;height:504.7px;background-color:#f2f2f2;border-top:1.4px solid #808080;border-left:1.4px solid #808080;"></div>
<div style="left:131.5px;top:114.5px;width:1023.5px;height:491.5px;background-image:radial-gradient(circle at 3.333px 3.333px,#868686 0,#868686 .55px,rgba(242,242,242,0) 1.05px);background-size:6.6667px 6.6667px;background-position:-3.4px -3.3px;"></div>
<div style="left:131.5px;top:114px;width:994.5px;height:33px;background:#f0f0f0;border-bottom:1px solid #c8c8c8;border-right:1px solid #c8c8c8;"></div><div class="t" style="left:598px;top:115px;width:60px;text-align:center;font-size:6px;color:#222;line-height:7px;">SollPos/Value[]</div><div class="t" style="left:127.0px;top:122.5px;width:20px;text-align:center;font-size:7.3px;color:#222;">0</div><div class="t" style="left:147.42000000000002px;top:122.5px;width:20px;text-align:center;font-size:7.3px;color:#222;">2</div><div class="t" style="left:167.84px;top:122.5px;width:20px;text-align:center;font-size:7.3px;color:#222;">4</div><div class="t" style="left:188.26px;top:122.5px;width:20px;text-align:center;font-size:7.3px;color:#222;">6</div><div class="t" style="left:208.68px;top:122.5px;width:20px;text-align:center;font-size:7.3px;color:#222;">8</div><div class="t" style="left:229.10000000000002px;top:122.5px;width:20px;text-align:center;font-size:7.3px;color:#222;">10</div><div class="t" style="left:249.51999999999998px;top:122.5px;width:20px;text-align:center;font-size:7.3px;color:#222;">12</div><div class="t" style="left:269.94px;top:122.5px;width:20px;text-align:center;font-size:7.3px;color:#222;">14</div><div class="t" style="left:290.36px;top:122.5px;width:20px;text-align:center;font-size:7.3px;color:#222;">16</div><div class="t" style="left:310.78000000000003px;top:122.5px;width:20px;text-align:center;font-size:7.3px;color:#222;">18</div><div class="t" style="left:331.20000000000005px;top:122.5px;width:20px;text-align:center;font-size:7.3px;color:#222;">20</div><div class="t" style="left:351.62px;top:122.5px;width:20px;text-align:center;font-size:7.3px;color:#222;">22</div><div class="t" style="left:372.04px;top:122.5px;width:20px;text-align:center;font-size:7.3px;color:#222;">24</div><div class="t" style="left:392.46000000000004px;top:122.5px;width:20px;text-align:center;font-size:7.3px;color:#222;">26</div><div class="t" style="left:412.88px;top:122.5px;width:20px;text-align:center;font-size:7.3px;color:#222;">28</div><div class="t" style="left:433.3px;top:122.5px;width:20px;text-align:center;font-size:7.3px;color:#222;">30</div><div class="t" style="left:453.72px;top:122.5px;width:20px;text-align:center;font-size:7.3px;color:#222;">32</div><div class="t" style="left:474.14000000000004px;top:122.5px;width:20px;text-align:center;font-size:7.3px;color:#222;">34</div><div class="t" style="left:494.56000000000006px;top:122.5px;width:20px;text-align:center;font-size:7.3px;color:#222;">36</div><div class="t" style="left:514.98px;top:122.5px;width:20px;text-align:center;font-size:7.3px;color:#222;">38</div><div class="t" style="left:535.4000000000001px;top:122.5px;width:20px;text-align:center;font-size:7.3px;color:#222;">40</div><div class="t" style="left:555.82px;top:122.5px;width:20px;text-align:center;font-size:7.3px;color:#222;">42</div><div class="t" style="left:576.24px;top:122.5px;width:20px;text-align:center;font-size:7.3px;color:#222;">44</div><div class="t" style="left:596.6600000000001px;top:122.5px;width:20px;text-align:center;font-size:7.3px;color:#222;">46</div><div class="t" style="left:617.08px;top:122.5px;width:20px;text-align:center;font-size:7.3px;color:#222;">48</div><div class="t" style="left:637.5px;top:122.5px;width:20px;text-align:center;font-size:7.3px;color:#222;">50</div><div class="t" style="left:657.9200000000001px;top:122.5px;width:20px;text-align:center;font-size:7.3px;color:#222;">52</div><div class="t" style="left:678.34px;top:122.5px;width:20px;text-align:center;font-size:7.3px;color:#222;">54</div><div class="t" style="left:698.76px;top:122.5px;width:20px;text-align:center;font-size:7.3px;color:#222;">56</div><div class="t" style="left:719.1800000000001px;top:122.5px;width:20px;text-align:center;font-size:7.3px;color:#222;">58</div><div class="t" style="left:739.6px;top:122.5px;width:20px;text-align:center;font-size:7.3px;color:#222;">60</div><div class="t" style="left:760.0200000000001px;top:122.5px;width:20px;text-align:center;font-size:7.3px;color:#222;">62</div><div class="t" style="left:780.44px;top:122.5px;width:20px;text-align:center;font-size:7.3px;color:#222;">64</div><div class="t" style="left:800.86px;top:122.5px;width:20px;text-align:center;font-size:7.3px;color:#222;">66</div><div class="t" style="left:821.2800000000001px;top:122.5px;width:20px;text-align:center;font-size:7.3px;color:#222;">68</div><div class="t" style="left:841.7px;top:122.5px;width:20px;text-align:center;font-size:7.3px;color:#222;">70</div><div class="t" style="left:862.1200000000001px;top:122.5px;width:20px;text-align:center;font-size:7.3px;color:#222;">72</div><div class="t" style="left:882.5400000000001px;top:122.5px;width:20px;text-align:center;font-size:7.3px;color:#222;">74</div><div class="t" style="left:902.96px;top:122.5px;width:20px;text-align:center;font-size:7.3px;color:#222;">76</div><div class="t" style="left:923.3800000000001px;top:122.5px;width:20px;text-align:center;font-size:7.3px;color:#222;">78</div><div class="t" style="left:943.8000000000001px;top:122.5px;width:20px;text-align:center;font-size:7.3px;color:#222;">80</div><div class="t" style="left:964.22px;top:122.5px;width:20px;text-align:center;font-size:7.3px;color:#222;">82</div><div class="t" style="left:984.6400000000001px;top:122.5px;width:20px;text-align:center;font-size:7.3px;color:#222;">84</div><div class="t" style="left:1005.0600000000001px;top:122.5px;width:20px;text-align:center;font-size:7.3px;color:#222;">86</div><div class="t" style="left:1025.48px;top:122.5px;width:20px;text-align:center;font-size:7.3px;color:#222;">88</div><div class="t" style="left:1045.9px;top:122.5px;width:20px;text-align:center;font-size:7.3px;color:#222;">90</div><div class="t" style="left:1066.3200000000002px;top:122.5px;width:20px;text-align:center;font-size:7.3px;color:#222;">92</div><div class="t" style="left:1086.7400000000002px;top:122.5px;width:20px;text-align:center;font-size:7.3px;color:#222;">94</div><svg style="left:0;top:0" width="1280" height="758"><rect x="136.30" y="132.1" width="1.4" height="2.2" fill="#111"/><rect x="140.58" y="133.1" width="1" height="1" fill="#444"/><rect x="144.67" y="133.1" width="1" height="1" fill="#444"/><rect x="148.75" y="133.1" width="1" height="1" fill="#444"/><rect x="152.84" y="133.1" width="1" height="1" fill="#444"/><rect x="156.72" y="132.1" width="1.4" height="2.2" fill="#111"/><rect x="161.00" y="133.1" width="1" height="1" fill="#444"/><rect x="165.09" y="133.1" width="1" height="1" fill="#444"/><rect x="169.17" y="133.1" width="1" height="1" fill="#444"/><rect x="173.26" y="133.1" width="1" height="1" fill="#444"/><rect x="177.14" y="132.1" width="1.4" height="2.2" fill="#111"/><rect x="181.42" y="133.1" width="1" height="1" fill="#444"/><rect x="185.51" y="133.1" width="1" height="1" fill="#444"/><rect x="189.59" y="133.1" width="1" height="1" fill="#444"/><rect x="193.68" y="133.1" width="1" height="1" fill="#444"/><rect x="197.56" y="132.1" width="1.4" height="2.2" fill="#111"/><rect x="201.84" y="133.1" width="1" height="1" fill="#444"/><rect x="205.93" y="133.1" width="1" height="1" fill="#444"/><rect x="210.01" y="133.1" width="1" height="1" fill="#444"/><rect x="214.10" y="133.1" width="1" height="1" fill="#444"/><rect x="217.98" y="132.1" width="1.4" height="2.2" fill="#111"/><rect x="222.26" y="133.1" width="1" height="1" fill="#444"/><rect x="226.35" y="133.1" width="1" height="1" fill="#444"/><rect x="230.43" y="133.1" width="1" height="1" fill="#444"/><rect x="234.52" y="133.1" width="1" height="1" fill="#444"/><rect x="238.40" y="132.1" width="1.4" height="2.2" fill="#111"/><rect x="242.68" y="133.1" width="1" height="1" fill="#444"/><rect x="246.77" y="133.1" width="1" height="1" fill="#444"/><rect x="250.85" y="133.1" width="1" height="1" fill="#444"/><rect x="254.94" y="133.1" width="1" height="1" fill="#444"/><rect x="258.82" y="132.1" width="1.4" height="2.2" fill="#111"/><rect x="263.10" y="133.1" width="1" height="1" fill="#444"/><rect x="267.19" y="133.1" width="1" height="1" fill="#444"/><rect x="271.27" y="133.1" width="1" height="1" fill="#444"/><rect x="275.36" y="133.1" width="1" height="1" fill="#444"/><rect x="279.24" y="132.1" width="1.4" height="2.2" fill="#111"/><rect x="283.52" y="133.1" width="1" height="1" fill="#444"/><rect x="287.61" y="133.1" width="1" height="1" fill="#444"/><rect x="291.69" y="133.1" width="1" height="1" fill="#444"/><rect x="295.78" y="133.1" width="1" height="1" fill="#444"/><rect x="299.66" y="132.1" width="1.4" height="2.2" fill="#111"/><rect x="303.94" y="133.1" width="1" height="1" fill="#444"/><rect x="308.03" y="133.1" width="1" height="1" fill="#444"/><rect x="312.11" y="133.1" width="1" height="1" fill="#444"/><rect x="316.20" y="133.1" width="1" height="1" fill="#444"/><rect x="320.08" y="132.1" width="1.4" height="2.2" fill="#111"/><rect x="324.36" y="133.1" width="1" height="1" fill="#444"/><rect x="328.45" y="133.1" width="1" height="1" fill="#444"/><rect x="332.53" y="133.1" width="1" height="1" fill="#444"/><rect x="336.62" y="133.1" width="1" height="1" fill="#444"/><rect x="340.50" y="132.1" width="1.4" height="2.2" fill="#111"/><rect x="344.78" y="133.1" width="1" height="1" fill="#444"/><rect x="348.87" y="133.1" width="1" height="1" fill="#444"/><rect x="352.95" y="133.1" width="1" height="1" fill="#444"/><rect x="357.04" y="133.1" width="1" height="1" fill="#444"/><rect x="360.92" y="132.1" width="1.4" height="2.2" fill="#111"/><rect x="365.20" y="133.1" width="1" height="1" fill="#444"/><rect x="369.29" y="133.1" width="1" height="1" fill="#444"/><rect x="373.37" y="133.1" width="1" height="1" fill="#444"/><rect x="377.46" y="133.1" width="1" height="1" fill="#444"/><rect x="381.34" y="132.1" width="1.4" height="2.2" fill="#111"/><rect x="385.62" y="133.1" width="1" height="1" fill="#444"/><rect x="389.71" y="133.1" width="1" height="1" fill="#444"/><rect x="393.79" y="133.1" width="1" height="1" fill="#444"/><rect x="397.88" y="133.1" width="1" height="1" fill="#444"/><rect x="401.76" y="132.1" width="1.4" height="2.2" fill="#111"/><rect x="406.04" y="133.1" width="1" height="1" fill="#444"/><rect x="410.13" y="133.1" width="1" height="1" fill="#444"/><rect x="414.21" y="133.1" width="1" height="1" fill="#444"/><rect x="418.30" y="133.1" width="1" height="1" fill="#444"/><rect x="422.18" y="132.1" width="1.4" height="2.2" fill="#111"/><rect x="426.46" y="133.1" width="1" height="1" fill="#444"/><rect x="430.55" y="133.1" width="1" height="1" fill="#444"/><rect x="434.63" y="133.1" width="1" height="1" fill="#444"/><rect x="438.72" y="133.1" width="1" height="1" fill="#444"/><rect x="442.60" y="132.1" width="1.4" height="2.2" fill="#111"/><rect x="446.88" y="133.1" width="1" height="1" fill="#444"/><rect x="450.97" y="133.1" width="1" height="1" fill="#444"/><rect x="455.05" y="133.1" width="1" height="1" fill="#444"/><rect x="459.14" y="133.1" width="1" height="1" fill="#444"/><rect x="463.02" y="132.1" width="1.4" height="2.2" fill="#111"/><rect x="467.30" y="133.1" width="1" height="1" fill="#444"/><rect x="471.39" y="133.1" width="1" height="1" fill="#444"/><rect x="475.47" y="133.1" width="1" height="1" fill="#444"/><rect x="479.56" y="133.1" width="1" height="1" fill="#444"/><rect x="483.44" y="132.1" width="1.4" height="2.2" fill="#111"/><rect x="487.72" y="133.1" width="1" height="1" fill="#444"/><rect x="491.81" y="133.1" width="1" height="1" fill="#444"/><rect x="495.89" y="133.1" width="1" height="1" fill="#444"/><rect x="499.98" y="133.1" width="1" height="1" fill="#444"/><rect x="503.86" y="132.1" width="1.4" height="2.2" fill="#111"/><rect x="508.14" y="133.1" width="1" height="1" fill="#444"/><rect x="512.23" y="133.1" width="1" height="1" fill="#444"/><rect x="516.31" y="133.1" width="1" height="1" fill="#444"/><rect x="520.40" y="133.1" width="1" height="1" fill="#444"/><rect x="524.28" y="132.1" width="1.4" height="2.2" fill="#111"/><rect x="528.56" y="133.1" width="1" height="1" fill="#444"/><rect x="532.65" y="133.1" width="1" height="1" fill="#444"/><rect x="536.73" y="133.1" width="1" height="1" fill="#444"/><rect x="540.82" y="133.1" width="1" height="1" fill="#444"/><rect x="544.70" y="132.1" width="1.4" height="2.2" fill="#111"/><rect x="548.98" y="133.1" width="1" height="1" fill="#444"/><rect x="553.07" y="133.1" width="1" height="1" fill="#444"/><rect x="557.15" y="133.1" width="1" height="1" fill="#444"/><rect x="561.24" y="133.1" width="1" height="1" fill="#444"/><rect x="565.12" y="132.1" width="1.4" height="2.2" fill="#111"/><rect x="569.40" y="133.1" width="1" height="1" fill="#444"/><rect x="573.49" y="133.1" width="1" height="1" fill="#444"/><rect x="577.57" y="133.1" width="1" height="1" fill="#444"/><rect x="581.66" y="133.1" width="1" height="1" fill="#444"/><rect x="585.54" y="132.1" width="1.4" height="2.2" fill="#111"/><rect x="589.82" y="133.1" width="1" height="1" fill="#444"/><rect x="593.91" y="133.1" width="1" height="1" fill="#444"/><rect x="597.99" y="133.1" width="1" height="1" fill="#444"/><rect x="602.08" y="133.1" width="1" height="1" fill="#444"/><rect x="605.96" y="132.1" width="1.4" height="2.2" fill="#111"/><rect x="610.24" y="133.1" width="1" height="1" fill="#444"/><rect x="614.33" y="133.1" width="1" height="1" fill="#444"/><rect x="618.41" y="133.1" width="1" height="1" fill="#444"/><rect x="622.50" y="133.1" width="1" height="1" fill="#444"/><rect x="626.38" y="132.1" width="1.4" height="2.2" fill="#111"/><rect x="630.66" y="133.1" width="1" height="1" fill="#444"/><rect x="634.75" y="133.1" width="1" height="1" fill="#444"/><rect x="638.83" y="133.1" width="1" height="1" fill="#444"/><rect x="642.92" y="133.1" width="1" height="1" fill="#444"/><rect x="646.80" y="132.1" width="1.4" height="2.2" fill="#111"/><rect x="651.08" y="133.1" width="1" height="1" fill="#444"/><rect x="655.17" y="133.1" width="1" height="1" fill="#444"/><rect x="659.25" y="133.1" width="1" height="1" fill="#444"/><rect x="663.34" y="133.1" width="1" height="1" fill="#444"/><rect x="667.22" y="132.1" width="1.4" height="2.2" fill="#111"/><rect x="671.50" y="133.1" width="1" height="1" fill="#444"/><rect x="675.59" y="133.1" width="1" height="1" fill="#444"/><rect x="679.67" y="133.1" width="1" height="1" fill="#444"/><rect x="683.76" y="133.1" width="1" height="1" fill="#444"/><rect x="687.64" y="132.1" width="1.4" height="2.2" fill="#111"/><rect x="691.92" y="133.1" width="1" height="1" fill="#444"/><rect x="696.01" y="133.1" width="1" height="1" fill="#444"/><rect x="700.09" y="133.1" width="1" height="1" fill="#444"/><rect x="704.18" y="133.1" width="1" height="1" fill="#444"/><rect x="708.06" y="132.1" width="1.4" height="2.2" fill="#111"/><rect x="712.34" y="133.1" width="1" height="1" fill="#444"/><rect x="716.43" y="133.1" width="1" height="1" fill="#444"/><rect x="720.51" y="133.1" width="1" height="1" fill="#444"/><rect x="724.60" y="133.1" width="1" height="1" fill="#444"/><rect x="728.48" y="132.1" width="1.4" height="2.2" fill="#111"/><rect x="732.76" y="133.1" width="1" height="1" fill="#444"/><rect x="736.85" y="133.1" width="1" height="1" fill="#444"/><rect x="740.93" y="133.1" width="1" height="1" fill="#444"/><rect x="745.02" y="133.1" width="1" height="1" fill="#444"/><rect x="748.90" y="132.1" width="1.4" height="2.2" fill="#111"/><rect x="753.18" y="133.1" width="1" height="1" fill="#444"/><rect x="757.27" y="133.1" width="1" height="1" fill="#444"/><rect x="761.35" y="133.1" width="1" height="1" fill="#444"/><rect x="765.44" y="133.1" width="1" height="1" fill="#444"/><rect x="769.32" y="132.1" width="1.4" height="2.2" fill="#111"/><rect x="773.60" y="133.1" width="1" height="1" fill="#444"/><rect x="777.69" y="133.1" width="1" height="1" fill="#444"/><rect x="781.77" y="133.1" width="1" height="1" fill="#444"/><rect x="785.86" y="133.1" width="1" height="1" fill="#444"/><rect x="789.74" y="132.1" width="1.4" height="2.2" fill="#111"/><rect x="794.02" y="133.1" width="1" height="1" fill="#444"/><rect x="798.11" y="133.1" width="1" height="1" fill="#444"/><rect x="802.19" y="133.1" width="1" height="1" fill="#444"/><rect x="806.28" y="133.1" width="1" height="1" fill="#444"/><rect x="810.16" y="132.1" width="1.4" height="2.2" fill="#111"/><rect x="814.44" y="133.1" width="1" height="1" fill="#444"/><rect x="818.53" y="133.1" width="1" height="1" fill="#444"/><rect x="822.61" y="133.1" width="1" height="1" fill="#444"/><rect x="826.70" y="133.1" width="1" height="1" fill="#444"/><rect x="830.58" y="132.1" width="1.4" height="2.2" fill="#111"/><rect x="834.86" y="133.1" width="1" height="1" fill="#444"/><rect x="838.95" y="133.1" width="1" height="1" fill="#444"/><rect x="843.03" y="133.1" width="1" height="1" fill="#444"/><rect x="847.12" y="133.1" width="1" height="1" fill="#444"/><rect x="851.00" y="132.1" width="1.4" height="2.2" fill="#111"/><rect x="855.28" y="133.1" width="1" height="1" fill="#444"/><rect x="859.37" y="133.1" width="1" height="1" fill="#444"/><rect x="863.45" y="133.1" width="1" height="1" fill="#444"/><rect x="867.54" y="133.1" width="1" height="1" fill="#444"/><rect x="871.42" y="132.1" width="1.4" height="2.2" fill="#111"/><rect x="875.70" y="133.1" width="1" height="1" fill="#444"/><rect x="879.79" y="133.1" width="1" height="1" fill="#444"/><rect x="883.87" y="133.1" width="1" height="1" fill="#444"/><rect x="887.96" y="133.1" width="1" height="1" fill="#444"/><rect x="891.84" y="132.1" width="1.4" height="2.2" fill="#111"/><rect x="896.12" y="133.1" width="1" height="1" fill="#444"/><rect x="900.21" y="133.1" width="1" height="1" fill="#444"/><rect x="904.29" y="133.1" width="1" height="1" fill="#444"/><rect x="908.38" y="133.1" width="1" height="1" fill="#444"/><rect x="912.26" y="132.1" width="1.4" height="2.2" fill="#111"/><rect x="916.54" y="133.1" width="1" height="1" fill="#444"/><rect x="920.63" y="133.1" width="1" height="1" fill="#444"/><rect x="924.71" y="133.1" width="1" height="1" fill="#444"/><rect x="928.80" y="133.1" width="1" height="1" fill="#444"/><rect x="932.68" y="132.1" width="1.4" height="2.2" fill="#111"/><rect x="936.96" y="133.1" width="1" height="1" fill="#444"/><rect x="941.05" y="133.1" width="1" height="1" fill="#444"/><rect x="945.13" y="133.1" width="1" height="1" fill="#444"/><rect x="949.22" y="133.1" width="1" height="1" fill="#444"/><rect x="953.10" y="132.1" width="1.4" height="2.2" fill="#111"/><rect x="957.38" y="133.1" width="1" height="1" fill="#444"/><rect x="961.47" y="133.1" width="1" height="1" fill="#444"/><rect x="965.55" y="133.1" width="1" height="1" fill="#444"/><rect x="969.64" y="133.1" width="1" height="1" fill="#444"/><rect x="973.52" y="132.1" width="1.4" height="2.2" fill="#111"/><rect x="977.80" y="133.1" width="1" height="1" fill="#444"/><rect x="981.89" y="133.1" width="1" height="1" fill="#444"/><rect x="985.97" y="133.1" width="1" height="1" fill="#444"/><rect x="990.06" y="133.1" width="1" height="1" fill="#444"/><rect x="993.94" y="132.1" width="1.4" height="2.2" fill="#111"/><rect x="998.22" y="133.1" width="1" height="1" fill="#444"/><rect x="1002.31" y="133.1" width="1" height="1" fill="#444"/><rect x="1006.39" y="133.1" width="1" height="1" fill="#444"/><rect x="1010.48" y="133.1" width="1" height="1" fill="#444"/><rect x="1014.36" y="132.1" width="1.4" height="2.2" fill="#111"/><rect x="1018.64" y="133.1" width="1" height="1" fill="#444"/><rect x="1022.73" y="133.1" width="1" height="1" fill="#444"/><rect x="1026.81" y="133.1" width="1" height="1" fill="#444"/><rect x="1030.90" y="133.1" width="1" height="1" fill="#444"/><rect x="1034.78" y="132.1" width="1.4" height="2.2" fill="#111"/><rect x="1039.06" y="133.1" width="1" height="1" fill="#444"/><rect x="1043.15" y="133.1" width="1" height="1" fill="#444"/><rect x="1047.23" y="133.1" width="1" height="1" fill="#444"/><rect x="1051.32" y="133.1" width="1" height="1" fill="#444"/><rect x="1055.20" y="132.1" width="1.4" height="2.2" fill="#111"/><rect x="1059.48" y="133.1" width="1" height="1" fill="#444"/><rect x="1063.57" y="133.1" width="1" height="1" fill="#444"/><rect x="1067.65" y="133.1" width="1" height="1" fill="#444"/><rect x="1071.74" y="133.1" width="1" height="1" fill="#444"/><rect x="1075.62" y="132.1" width="1.4" height="2.2" fill="#111"/><rect x="1079.90" y="133.1" width="1" height="1" fill="#444"/><rect x="1083.99" y="133.1" width="1" height="1" fill="#444"/><rect x="1088.07" y="133.1" width="1" height="1" fill="#444"/><rect x="1092.16" y="133.1" width="1" height="1" fill="#444"/><rect x="1096.04" y="132.1" width="1.4" height="2.2" fill="#111"/></svg><div style="left:135px;top:135.5px;width:973px;height:10.5px;background:#a0a0a0;border-top:1.3px solid #1a1a1a;border-left:1.3px solid #1a1a1a;border-bottom:1px solid #d0d0d0;border-right:1px solid #d0d0d0;"></div><div style="left:471.5px;top:135.5px;width:5px;height:10.5px;background:linear-gradient(to right,#f4f4f4,#dcdcdc 45%,#9a9a9a 50%,#e8e8e8 60%,#f0f0f0);"></div><div class="t" style="left:1110px;top:127px;font-size:7.3px;color:#222;">E+3</div>
<div style="left:1123px;top:144px;width:4px;height:4px;border:1px solid #6f8fc0;background:#dfe8f5;"></div>
<div style="left:165px;top:161.5px;width:133px;height:73px;background:#efefef;border-bottom:1px dotted #9a9a9a;border-right:1px dotted #9a9a9a;"></div>
<div class="t" style="left:170.5px;top:168.3px;font-size:15.9px;line-height:18px;color:#111;">Labels/IstSchritte</div>
<div class="t" style="left:171.8px;top:190.4px;font-family:'DejaVu Sans','Liberation Mono',monospace;font-weight:200;font-size:31px;letter-spacing:1.7px;line-height:36px;color:#000;">354</div>
<div style="left:325.5px;top:221px;width:80px;height:27px;background:#e5e5e5;border-top:1px solid #f4f4f4;border-left:1px solid #f4f4f4;border-bottom:1px dotted #9a9a9a;border-right:1px dotted #9a9a9a;"></div>
<div class="t" style="left:325.5px;top:222.5px;width:79px;text-align:center;font-size:8px;color:#222;">Subtract/Out1</div>
<div class="t" style="left:329px;top:233.5px;font-size:6px;color:#b4b4b4;">&#8212; &#8212; &#8212;</div>
<div style="left:192px;top:348.8px;width:80px;height:26px;background:#e5e5e5;border-top:1px solid #f4f4f4;border-left:1px solid #f4f4f4;border-bottom:1px dotted #9a9a9a;border-right:1px dotted #9a9a9a;"></div>
<div class="t" style="left:191.5px;top:351.3px;width:79px;text-align:center;font-size:9.2px;line-height:11px;color:#111;">Constant7/Value</div>
<div style="left:194px;top:365px;width:7px;height:7px;background:#d0d0d0;border:1px solid #b0b0b0;"></div>
<div class="t" style="left:204.5px;top:363.7px;font-size:8px;color:#c9c9c9;">Check</div>
<div style="left:131.5px;top:475px;width:292.5px;height:52px;background:#f0f0f0;border-bottom:1px solid #c8c8c8;border-right:1px solid #c8c8c8;"></div><div class="t" style="left:178px;top:475px;width:200px;text-align:center;font-size:10.7px;line-height:13px;color:#222;">Pulse\nGenerator/Period[]</div><div class="t" style="left:127.0px;top:488px;width:20px;text-align:center;font-size:7.5px;color:#222;">0</div><div class="t" style="left:154.97px;top:488px;width:20px;text-align:center;font-size:7.5px;color:#222;">1</div><div class="t" style="left:182.94px;top:488px;width:20px;text-align:center;font-size:7.5px;color:#222;">2</div><div class="t" style="left:210.91px;top:488px;width:20px;text-align:center;font-size:7.5px;color:#222;">3</div><div class="t" style="left:238.88px;top:488px;width:20px;text-align:center;font-size:7.5px;color:#222;">4</div><div class="t" style="left:266.85px;top:488px;width:20px;text-align:center;font-size:7.5px;color:#222;">5</div><div class="t" style="left:294.82px;top:488px;width:20px;text-align:center;font-size:7.5px;color:#222;">6</div><div class="t" style="left:322.78999999999996px;top:488px;width:20px;text-align:center;font-size:7.5px;color:#222;">7</div><div class="t" style="left:350.76px;top:488px;width:20px;text-align:center;font-size:7.5px;color:#222;">8</div><div class="t" style="left:378.73px;top:488px;width:20px;text-align:center;font-size:7.5px;color:#222;">9</div><div class="t" style="left:406.7px;top:488px;width:20px;text-align:center;font-size:7.5px;color:#222;">10</div><svg style="left:0;top:0" width="1280" height="758"><rect x="136.30" y="497.1" width="1.4" height="2.2" fill="#111"/><rect x="142.09" y="498.1" width="1" height="1" fill="#444"/><rect x="147.69" y="498.1" width="1" height="1" fill="#444"/><rect x="153.28" y="498.1" width="1" height="1" fill="#444"/><rect x="158.88" y="498.1" width="1" height="1" fill="#444"/><rect x="164.27" y="497.1" width="1.4" height="2.2" fill="#111"/><rect x="170.06" y="498.1" width="1" height="1" fill="#444"/><rect x="175.66" y="498.1" width="1" height="1" fill="#444"/><rect x="181.25" y="498.1" width="1" height="1" fill="#444"/><rect x="186.85" y="498.1" width="1" height="1" fill="#444"/><rect x="192.24" y="497.1" width="1.4" height="2.2" fill="#111"/><rect x="198.03" y="498.1" width="1" height="1" fill="#444"/><rect x="203.63" y="498.1" width="1" height="1" fill="#444"/><rect x="209.22" y="498.1" width="1" height="1" fill="#444"/><rect x="214.82" y="498.1" width="1" height="1" fill="#444"/><rect x="220.21" y="497.1" width="1.4" height="2.2" fill="#111"/><rect x="226.00" y="498.1" width="1" height="1" fill="#444"/><rect x="231.60" y="498.1" width="1" height="1" fill="#444"/><rect x="237.19" y="498.1" width="1" height="1" fill="#444"/><rect x="242.79" y="498.1" width="1" height="1" fill="#444"/><rect x="248.18" y="497.1" width="1.4" height="2.2" fill="#111"/><rect x="253.97" y="498.1" width="1" height="1" fill="#444"/><rect x="259.57" y="498.1" width="1" height="1" fill="#444"/><rect x="265.16" y="498.1" width="1" height="1" fill="#444"/><rect x="270.76" y="498.1" width="1" height="1" fill="#444"/><rect x="276.15" y="497.1" width="1.4" height="2.2" fill="#111"/><rect x="281.94" y="498.1" width="1" height="1" fill="#444"/><rect x="287.54" y="498.1" width="1" height="1" fill="#444"/><rect x="293.13" y="498.1" width="1" height="1" fill="#444"/><rect x="298.73" y="498.1" width="1" height="1" fill="#444"/><rect x="304.12" y="497.1" width="1.4" height="2.2" fill="#111"/><rect x="309.91" y="498.1" width="1" height="1" fill="#444"/><rect x="315.51" y="498.1" width="1" height="1" fill="#444"/><rect x="321.10" y="498.1" width="1" height="1" fill="#444"/><rect x="326.70" y="498.1" width="1" height="1" fill="#444"/><rect x="332.09" y="497.1" width="1.4" height="2.2" fill="#111"/><rect x="337.88" y="498.1" width="1" height="1" fill="#444"/><rect x="343.48" y="498.1" width="1" height="1" fill="#444"/><rect x="349.07" y="498.1" width="1" height="1" fill="#444"/><rect x="354.67" y="498.1" width="1" height="1" fill="#444"/><rect x="360.06" y="497.1" width="1.4" height="2.2" fill="#111"/><rect x="365.85" y="498.1" width="1" height="1" fill="#444"/><rect x="371.45" y="498.1" width="1" height="1" fill="#444"/><rect x="377.04" y="498.1" width="1" height="1" fill="#444"/><rect x="382.64" y="498.1" width="1" height="1" fill="#444"/><rect x="388.03" y="497.1" width="1.4" height="2.2" fill="#111"/><rect x="393.82" y="498.1" width="1" height="1" fill="#444"/><rect x="399.42" y="498.1" width="1" height="1" fill="#444"/><rect x="405.01" y="498.1" width="1" height="1" fill="#444"/><rect x="410.61" y="498.1" width="1" height="1" fill="#444"/><rect x="416.00" y="497.1" width="1.4" height="2.2" fill="#111"/></svg><div style="left:135px;top:501px;width:283px;height:24.5px;background:#a0a0a0;border-top:1.3px solid #1a1a1a;border-left:1.3px solid #1a1a1a;border-bottom:1px solid #d0d0d0;border-right:1px solid #d0d0d0;"></div><div style="left:189.5px;top:501px;width:7px;height:24.5px;background:linear-gradient(to right,#f4f4f4,#dcdcdc 45%,#9a9a9a 50%,#e8e8e8 60%,#f0f0f0);"></div>
<div style="left:131.5px;top:534.5px;width:292.5px;height:46.5px;background:#f0f0f0;border-bottom:1px solid #c8c8c8;border-right:1px solid #c8c8c8;"></div><div class="t" style="left:178px;top:535.5px;width:200px;text-align:center;font-size:8.7px;line-height:11px;color:#222;">Pulse\nGenerator/PulseWidth[]</div><div class="t" style="left:127.0px;top:546px;width:20px;text-align:center;font-size:7.5px;color:#222;">0</div><div class="t" style="left:154.97px;top:546px;width:20px;text-align:center;font-size:7.5px;color:#222;">1</div><div class="t" style="left:182.94px;top:546px;width:20px;text-align:center;font-size:7.5px;color:#222;">2</div><div class="t" style="left:210.91px;top:546px;width:20px;text-align:center;font-size:7.5px;color:#222;">3</div><div class="t" style="left:238.88px;top:546px;width:20px;text-align:center;font-size:7.5px;color:#222;">4</div><div class="t" style="left:266.85px;top:546px;width:20px;text-align:center;font-size:7.5px;color:#222;">5</div><div class="t" style="left:294.82px;top:546px;width:20px;text-align:center;font-size:7.5px;color:#222;">6</div><div class="t" style="left:322.78999999999996px;top:546px;width:20px;text-align:center;font-size:7.5px;color:#222;">7</div><div class="t" style="left:350.76px;top:546px;width:20px;text-align:center;font-size:7.5px;color:#222;">8</div><div class="t" style="left:378.73px;top:546px;width:20px;text-align:center;font-size:7.5px;color:#222;">9</div><div class="t" style="left:406.7px;top:546px;width:20px;text-align:center;font-size:7.5px;color:#222;">10</div><svg style="left:0;top:0" width="1280" height="758"><rect x="136.30" y="555.1" width="1.4" height="2.2" fill="#111"/><rect x="142.09" y="556.1" width="1" height="1" fill="#444"/><rect x="147.69" y="556.1" width="1" height="1" fill="#444"/><rect x="153.28" y="556.1" width="1" height="1" fill="#444"/><rect x="158.88" y="556.1" width="1" height="1" fill="#444"/><rect x="164.27" y="555.1" width="1.4" height="2.2" fill="#111"/><rect x="170.06" y="556.1" width="1" height="1" fill="#444"/><rect x="175.66" y="556.1" width="1" height="1" fill="#444"/><rect x="181.25" y="556.1" width="1" height="1" fill="#444"/><rect x="186.85" y="556.1" width="1" height="1" fill="#444"/><rect x="192.24" y="555.1" width="1.4" height="2.2" fill="#111"/><rect x="198.03" y="556.1" width="1" height="1" fill="#444"/><rect x="203.63" y="556.1" width="1" height="1" fill="#444"/><rect x="209.22" y="556.1" width="1" height="1" fill="#444"/><rect x="214.82" y="556.1" width="1" height="1" fill="#444"/><rect x="220.21" y="555.1" width="1.4" height="2.2" fill="#111"/><rect x="226.00" y="556.1" width="1" height="1" fill="#444"/><rect x="231.60" y="556.1" width="1" height="1" fill="#444"/><rect x="237.19" y="556.1" width="1" height="1" fill="#444"/><rect x="242.79" y="556.1" width="1" height="1" fill="#444"/><rect x="248.18" y="555.1" width="1.4" height="2.2" fill="#111"/><rect x="253.97" y="556.1" width="1" height="1" fill="#444"/><rect x="259.57" y="556.1" width="1" height="1" fill="#444"/><rect x="265.16" y="556.1" width="1" height="1" fill="#444"/><rect x="270.76" y="556.1" width="1" height="1" fill="#444"/><rect x="276.15" y="555.1" width="1.4" height="2.2" fill="#111"/><rect x="281.94" y="556.1" width="1" height="1" fill="#444"/><rect x="287.54" y="556.1" width="1" height="1" fill="#444"/><rect x="293.13" y="556.1" width="1" height="1" fill="#444"/><rect x="298.73" y="556.1" width="1" height="1" fill="#444"/><rect x="304.12" y="555.1" width="1.4" height="2.2" fill="#111"/><rect x="309.91" y="556.1" width="1" height="1" fill="#444"/><rect x="315.51" y="556.1" width="1" height="1" fill="#444"/><rect x="321.10" y="556.1" width="1" height="1" fill="#444"/><rect x="326.70" y="556.1" width="1" height="1" fill="#444"/><rect x="332.09" y="555.1" width="1.4" height="2.2" fill="#111"/><rect x="337.88" y="556.1" width="1" height="1" fill="#444"/><rect x="343.48" y="556.1" width="1" height="1" fill="#444"/><rect x="349.07" y="556.1" width="1" height="1" fill="#444"/><rect x="354.67" y="556.1" width="1" height="1" fill="#444"/><rect x="360.06" y="555.1" width="1.4" height="2.2" fill="#111"/><rect x="365.85" y="556.1" width="1" height="1" fill="#444"/><rect x="371.45" y="556.1" width="1" height="1" fill="#444"/><rect x="377.04" y="556.1" width="1" height="1" fill="#444"/><rect x="382.64" y="556.1" width="1" height="1" fill="#444"/><rect x="388.03" y="555.1" width="1.4" height="2.2" fill="#111"/><rect x="393.82" y="556.1" width="1" height="1" fill="#444"/><rect x="399.42" y="556.1" width="1" height="1" fill="#444"/><rect x="405.01" y="556.1" width="1" height="1" fill="#444"/><rect x="410.61" y="556.1" width="1" height="1" fill="#444"/><rect x="416.00" y="555.1" width="1.4" height="2.2" fill="#111"/></svg><div style="left:135px;top:559.5px;width:283px;height:19.5px;background:#a0a0a0;border-top:1.3px solid #1a1a1a;border-left:1.3px solid #1a1a1a;border-bottom:1px solid #d0d0d0;border-right:1px solid #d0d0d0;"></div><div style="left:161.5px;top:559.5px;width:6.5px;height:19.5px;background:linear-gradient(to right,#f4f4f4,#dcdcdc 45%,#9a9a9a 50%,#e8e8e8 60%,#f0f0f0);"></div>
<div style="left:131.5px;top:606px;width:1023.5px;height:12px;background:#f0f0f0;"></div><div style="left:143px;top:606.5px;width:963px;height:11px;background:linear-gradient(#f6f6f6,#e3e3e3 50%,#d2d2d2 51%,#dcdcdc);border:1px solid #9a9a9a;border-radius:2px;"></div><div class="t" style="left:143px;top:605px;width:963px;text-align:center;font-size:3px;letter-spacing:.5px;color:#666;line-height:14px;">&#9612;&#9612;&#9612;</div><svg style="left:135.5px;top:609.5px" width="4" height="5"><polygon points="3,0 3,5 0,2.5" fill="#444"/></svg><svg style="left:1147.0px;top:609.5px" width="4" height="5"><polygon points="0,0 0,5 3,2.5" fill="#444"/></svg>
<div style="left:459px;top:181.5px;width:598.5px;height:392.5px;background:#fff;border-right:1px dashed #9a9a9a;border-bottom:1px dashed #9a9a9a;"></div>
<div style="left:460px;top:183.5px;width:9.5px;height:9.5px;border-radius:5px;background:radial-gradient(#f6e4e4,#d9b0b0);border:1px solid #8a6a6a;"></div>
<div style="left:462.3px;top:185.8px;width:5px;height:5px;background:#b84a4a;border-radius:2.5px;opacity:.75"></div><div style="left:463.5px;top:187px;width:2.5px;height:2.5px;background:#f0e0e0;border-radius:1.5px;"></div>
<div style="left:472px;top:183.5px;width:9.5px;height:9.5px;border-radius:5px;background:radial-gradient(#f6f6f6,#c4c4c4);border:1px solid #777;"></div>
<div class="t" style="left:475px;top:183px;font-size:7.5px;font-weight:bold;font-style:italic;color:#222;">f</div>
<div class="t" style="left:487px;top:183px;font-size:8.5px;font-weight:bold;color:#1a1a1a;line-height:11px;">Plotter_6:&nbsp; Labels/IstSchritte</div>
<div style="left:459px;top:195px;width:598px;height:1px;background:#8a8a8a;"></div>
<div class="t" style="left:460px;top:196.5px;font-size:7.3px;color:#222;">-2.14748e+009 .. 2.14748e+009&nbsp; Converted</div>
<div style="left:459px;top:216px;width:598px;height:231px;background:#000;"></div>
<svg style="left:0;top:0" width="1280" height="758"><line x1="495.3" y1="216" x2="495.3" y2="447" stroke="#fff" stroke-width="1.1" stroke-dasharray="1.6,1.7"/><line x1="546.5" y1="222" x2="546.5" y2="431" stroke="#d8d8d8" stroke-width=".8"/><line x1="542.5" y1="430.0" x2="548" y2="430.0" stroke="#e0e0e0" stroke-width=".8"/><line x1="544.0" y1="401.6" x2="548" y2="401.6" stroke="#e0e0e0" stroke-width=".8"/><line x1="542.5" y1="373.1" x2="548" y2="373.1" stroke="#e0e0e0" stroke-width=".8"/><line x1="544.0" y1="344.7" x2="548" y2="344.7" stroke="#e0e0e0" stroke-width=".8"/><line x1="542.5" y1="316.3" x2="548" y2="316.3" stroke="#e0e0e0" stroke-width=".8"/><line x1="544.0" y1="287.9" x2="548" y2="287.9" stroke="#e0e0e0" stroke-width=".8"/><line x1="542.5" y1="259.4" x2="548" y2="259.4" stroke="#e0e0e0" stroke-width=".8"/><line x1="544.0" y1="231.0" x2="548" y2="231.0" stroke="#e0e0e0" stroke-width=".8"/><line x1="555" y1="430" x2="1053" y2="430" stroke="#e6e6e6" stroke-width=".9"/><line x1="554.8" y1="428.4" x2="554.8" y2="432" stroke="#f0f0f0" stroke-width=".9"/><line x1="554.8" y1="462.5" x2="554.8" y2="464" stroke="#ddd" stroke-width=".9"/><line x1="579.7" y1="428.4" x2="579.7" y2="432" stroke="#f0f0f0" stroke-width=".9"/><line x1="579.7" y1="462.5" x2="579.7" y2="464" stroke="#ddd" stroke-width=".9"/><line x1="604.6" y1="428.4" x2="604.6" y2="432" stroke="#f0f0f0" stroke-width=".9"/><line x1="604.6" y1="462.5" x2="604.6" y2="464" stroke="#ddd" stroke-width=".9"/><line x1="629.5" y1="428.4" x2="629.5" y2="432" stroke="#f0f0f0" stroke-width=".9"/><line x1="629.5" y1="462.5" x2="629.5" y2="464" stroke="#ddd" stroke-width=".9"/><line x1="654.4" y1="428.4" x2="654.4" y2="432" stroke="#f0f0f0" stroke-width=".9"/><line x1="654.4" y1="462.5" x2="654.4" y2="464" stroke="#ddd" stroke-width=".9"/><line x1="679.2" y1="428.4" x2="679.2" y2="432" stroke="#f0f0f0" stroke-width=".9"/><line x1="679.2" y1="462.5" x2="679.2" y2="464" stroke="#ddd" stroke-width=".9"/><line x1="704.1" y1="428.4" x2="704.1" y2="432" stroke="#f0f0f0" stroke-width=".9"/><line x1="704.1" y1="462.5" x2="704.1" y2="464" stroke="#ddd" stroke-width=".9"/><line x1="729.0" y1="428.4" x2="729.0" y2="432" stroke="#f0f0f0" stroke-width=".9"/><line x1="729.0" y1="462.5" x2="729.0" y2="464" stroke="#ddd" stroke-width=".9"/><line x1="753.9" y1="428.4" x2="753.9" y2="432" stroke="#f0f0f0" stroke-width=".9"/><line x1="753.9" y1="462.5" x2="753.9" y2="464" stroke="#ddd" stroke-width=".9"/><line x1="778.8" y1="428.4" x2="778.8" y2="432" stroke="#f0f0f0" stroke-width=".9"/><line x1="778.8" y1="462.5" x2="778.8" y2="464" stroke="#ddd" stroke-width=".9"/><line x1="803.7" y1="428.4" x2="803.7" y2="432" stroke="#f0f0f0" stroke-width=".9"/><line x1="803.7" y1="462.5" x2="803.7" y2="464" stroke="#ddd" stroke-width=".9"/><line x1="828.6" y1="428.4" x2="828.6" y2="432" stroke="#f0f0f0" stroke-width=".9"/><line x1="828.6" y1="462.5" x2="828.6" y2="464" stroke="#ddd" stroke-width=".9"/><line x1="853.5" y1="428.4" x2="853.5" y2="432" stroke="#f0f0f0" stroke-width=".9"/><line x1="853.5" y1="462.5" x2="853.5" y2="464" stroke="#ddd" stroke-width=".9"/><line x1="878.4" y1="428.4" x2="878.4" y2="432" stroke="#f0f0f0" stroke-width=".9"/><line x1="878.4" y1="462.5" x2="878.4" y2="464" stroke="#ddd" stroke-width=".9"/><line x1="903.3" y1="428.4" x2="903.3" y2="432" stroke="#f0f0f0" stroke-width=".9"/><line x1="903.3" y1="462.5" x2="903.3" y2="464" stroke="#ddd" stroke-width=".9"/><line x1="928.1" y1="428.4" x2="928.1" y2="432" stroke="#f0f0f0" stroke-width=".9"/><line x1="928.1" y1="462.5" x2="928.1" y2="464" stroke="#ddd" stroke-width=".9"/><line x1="953.0" y1="428.4" x2="953.0" y2="432" stroke="#f0f0f0" stroke-width=".9"/><line x1="953.0" y1="462.5" x2="953.0" y2="464" stroke="#ddd" stroke-width=".9"/><line x1="977.9" y1="428.4" x2="977.9" y2="432" stroke="#f0f0f0" stroke-width=".9"/><line x1="977.9" y1="462.5" x2="977.9" y2="464" stroke="#ddd" stroke-width=".9"/><line x1="1002.8" y1="428.4" x2="1002.8" y2="432" stroke="#f0f0f0" stroke-width=".9"/><line x1="1002.8" y1="462.5" x2="1002.8" y2="464" stroke="#ddd" stroke-width=".9"/><line x1="1027.7" y1="428.4" x2="1027.7" y2="432" stroke="#f0f0f0" stroke-width=".9"/><line x1="1027.7" y1="462.5" x2="1027.7" y2="464" stroke="#ddd" stroke-width=".9"/><line x1="1052.6" y1="428.4" x2="1052.6" y2="432" stroke="#f0f0f0" stroke-width=".9"/><line x1="1052.6" y1="462.5" x2="1052.6" y2="464" stroke="#ddd" stroke-width=".9"/><polyline points="617,430 617,222.7 977.5,222.7" fill="none" stroke="#4f8a43" stroke-width="1.1"/><polyline points="555.5,430 617.5,430 977.5,222.7" fill="none" stroke="#e0202c" stroke-width="1.9" stroke-linejoin="round"/><line x1="555.5" y1="430" x2="617" y2="430" stroke="#b02028" stroke-width="2"/><rect x="533.5" y="416" width="8" height="8" fill="#e81818" stroke="#f2a0a0" stroke-width=".8"/></svg>
<div style="left:548.7px;top:216px;width:2.5px;height:243px;background:#fff;"></div>
<div class="t" style="left:520px;top:254.3px;color:#f2f2f2;font-size:7.3px;width:23.5px;text-align:right;">300</div>
<div class="t" style="left:520px;top:311.3px;color:#f2f2f2;font-size:7.3px;width:23.5px;text-align:right;">200</div>
<div class="t" style="left:520px;top:368.3px;color:#f2f2f2;font-size:7.3px;width:23.5px;text-align:right;">100</div>
<div class="t" style="left:520px;top:425px;color:#f2f2f2;font-size:7.3px;width:23.5px;text-align:right;">0</div>
<div class="t" style="left:549.5px;top:433.3px;color:#f2f2f2;font-size:7.3px;clip-path:inset(0 0 0 1.8px);">0.0</div>
<div class="t" style="left:599.28px;top:433.3px;color:#f2f2f2;font-size:7.3px;">0.1</div>
<div class="t" style="left:649.06px;top:433.3px;color:#f2f2f2;font-size:7.3px;">0.2</div>
<div class="t" style="left:698.84px;top:433.3px;color:#f2f2f2;font-size:7.3px;">0.3</div>
<div class="t" style="left:748.62px;top:433.3px;color:#f2f2f2;font-size:7.3px;">0.4</div>
<div class="t" style="left:798.4px;top:433.3px;color:#f2f2f2;font-size:7.3px;">0.5</div>
<div class="t" style="left:848.1800000000001px;top:433.3px;color:#f2f2f2;font-size:7.3px;">0.6</div>
<div class="t" style="left:897.96px;top:433.3px;color:#f2f2f2;font-size:7.3px;">0.7</div>
<div class="t" style="left:947.74px;top:433.3px;color:#f2f2f2;font-size:7.3px;">0.8</div>
<div class="t" style="left:997.52px;top:433.3px;color:#f2f2f2;font-size:7.3px;">0.9</div>
<div class="t" style="left:1047.4px;top:433.3px;color:#f2f2f2;font-size:7.3px;width:9.6px;overflow:hidden;">1.0</div>
<div class="t" style="left:554px;top:416.5px;color:#f2f2f2;font-size:7.3px;">5.243 s</div>
<div class="t" style="left:518px;top:357px;transform-origin:0 0;transform:rotate(-90deg);color:#f0f0f0;font-size:7.1px;">Labels/IstSchritte []</div>
<div style="left:459px;top:447px;width:89.5px;height:12px;background:#f0f0f0;"></div><div style="left:471.5px;top:447.5px;width:40px;height:11px;background:linear-gradient(#f6f6f6,#e3e3e3 50%,#d2d2d2 51%,#dcdcdc);border:1px solid #9a9a9a;border-radius:2px;"></div><div class="t" style="left:471.5px;top:446px;width:40px;text-align:center;font-size:3px;letter-spacing:.5px;color:#666;line-height:14px;">&#9612;&#9612;&#9612;</div><svg style="left:463px;top:450.5px" width="4" height="5"><polygon points="3,0 3,5 0,2.5" fill="#444"/></svg><svg style="left:540.5px;top:450.5px" width="4" height="5"><polygon points="0,0 0,5 3,2.5" fill="#444"/></svg>
<div style="left:551.5px;top:447px;width:505.5px;height:12px;background:#f0f0f0;"></div><div style="left:563px;top:447.5px;width:481.5px;height:11px;background:linear-gradient(#f6f6f6,#e3e3e3 50%,#d2d2d2 51%,#dcdcdc);border:1px solid #9a9a9a;border-radius:2px;"></div><div class="t" style="left:563px;top:446px;width:481.5px;text-align:center;font-size:3px;letter-spacing:.5px;color:#666;line-height:14px;">&#9612;&#9612;&#9612;</div><svg style="left:555.5px;top:450.5px" width="4" height="5"><polygon points="3,0 3,5 0,2.5" fill="#444"/></svg><svg style="left:1049.0px;top:450.5px" width="4" height="5"><polygon points="0,0 0,5 3,2.5" fill="#444"/></svg>
<div style="left:459px;top:461.4px;width:96.5px;height:5px;background:#000;"></div>
<div style="left:555px;top:462.4px;width:502px;height:3.4px;background:#000;"></div>
<div style="left:1052px;top:461.4px;width:5px;height:5px;background:#000;"></div>
<div style="left:459px;top:468px;width:598px;height:1px;background:#d2d2d2;"></div>
<div style="left:459px;top:470px;width:598px;height:14.5px;background:linear-gradient(#fff,#f4f4f4);border-bottom:1px solid #dcdcdc;"></div>
<div class="t" style="left:463.5px;top:472.5px;font-size:7.3px;color:#1a1a1a;">#</div>
<div class="t" style="left:476px;top:472.5px;font-size:7.3px;color:#1a1a1a;">Name</div>
<div class="t" style="left:576px;top:472.5px;font-size:7.3px;color:#1a1a1a;">Value</div>
<div class="t" style="left:629px;top:472.5px;font-size:7.3px;color:#1a1a1a;">Unit</div>
<div class="t" style="left:683px;top:472.5px;font-size:7.3px;color:#1a1a1a;">+</div>
<div class="t" style="left:696.5px;top:472.5px;font-size:7.3px;color:#1a1a1a;">Raster</div>
<div class="t" style="left:730px;top:472.5px;font-size:7.3px;color:#1a1a1a;">Platfo...</div>
<div class="t" style="left:763.5px;top:472.5px;font-size:7.3px;color:#1a1a1a;">Y1</div>
<div class="t" style="left:802.5px;top:472.5px;font-size:7.3px;color:#1a1a1a;">Y2</div>
<div class="t" style="left:843px;top:472.5px;font-size:7.3px;color:#1a1a1a;">Y2-Y1</div>
<div class="t" style="left:883px;top:472.5px;font-size:7.3px;color:#1a1a1a;">Downsampling</div>
<div class="t" style="left:942.5px;top:472.5px;font-size:7.3px;color:#1a1a1a;">X-Axis Offset</div>
<div style="left:572.5px;top:471px;width:1px;height:13px;background:#e2e2e2;"></div>
<div style="left:625px;top:471px;width:1px;height:13px;background:#e2e2e2;"></div>
<div style="left:679px;top:471px;width:1px;height:13px;background:#e2e2e2;"></div>
<div style="left:692.5px;top:471px;width:1px;height:13px;background:#e2e2e2;"></div>
<div style="left:726px;top:471px;width:1px;height:13px;background:#e2e2e2;"></div>
<div style="left:759px;top:471px;width:1px;height:13px;background:#e2e2e2;"></div>
<div style="left:798.5px;top:471px;width:1px;height:13px;background:#e2e2e2;"></div>
<div style="left:838.5px;top:471px;width:1px;height:13px;background:#e2e2e2;"></div>
<div style="left:879px;top:471px;width:1px;height:13px;background:#e2e2e2;"></div>
<div style="left:938.5px;top:471px;width:1px;height:13px;background:#e2e2e2;"></div>
<div style="left:992.5px;top:471px;width:1px;height:13px;background:#e2e2e2;"></div>
<div style="left:459px;top:497.5px;width:533.5px;height:11.7px;background:#efefef;"></div>
<div style="left:462.2px;top:486.3px;width:9.5px;height:10.2px;background:#2ee82e;border:1px solid #189a18;"></div>
<div style="left:462.2px;top:498.3px;width:9.5px;height:10.2px;background:#ee1c1c;border:1px solid #a01010;"></div>
<div class="t" style="left:476px;top:486.5px;font-size:7.3px;color:#1a1a1a;">Labels/Sollschritte</div>
<div class="t" style="left:576px;top:486.5px;font-size:7.3px;color:#1a1a1a;">10000</div>
<div class="t" style="left:696.5px;top:486.5px;font-size:7.3px;color:#1a1a1a;">HostS...</div>
<div class="t" style="left:730px;top:486.5px;font-size:7.3px;color:#1a1a1a;">Platfo...</div>
<div class="t" style="left:883px;top:486.5px;font-size:7.3px;color:#1a1a1a;">[1:1]</div>
<div class="t" style="left:942.5px;top:486.5px;font-size:7.3px;color:#1a1a1a;">0</div>
<div class="t" style="left:476px;top:498.7px;font-size:7.3px;color:#1a1a1a;">Labels/IstSchritte</div>
<div class="t" style="left:576px;top:498.7px;font-size:7.3px;color:#1a1a1a;">363</div>
<div class="t" style="left:696.5px;top:498.7px;font-size:7.3px;color:#1a1a1a;">HostS...</div>
<div class="t" style="left:730px;top:498.7px;font-size:7.3px;color:#1a1a1a;">Platfo...</div>
<div class="t" style="left:883px;top:498.7px;font-size:7.3px;color:#1a1a1a;">[1:1]</div>
<div class="t" style="left:942.5px;top:498.7px;font-size:7.3px;color:#1a1a1a;">0</div>
<div style="left:1161.5px;top:96.3px;width:104.5px;height:11.7px;background:linear-gradient(#bccadd,#afbfd6);border:1px solid #a4b4cb;"></div>
<div class="t" style="left:1164px;top:97.2px;font-size:8.3px;color:#4a5a75;">Properties</div>
<svg style="left:1235px;top:100.5px" width="7" height="4"><polygon points="0,0 6,0 3,3.5" fill="#1c2c4c"/></svg>
<svg style="left:1247px;top:97.5px" width="6" height="9"><path d="M1.5,0.5 h3 v4 h-3 z M0,4.8 h6 M3,5 v3.5" stroke="#1c2c4c" fill="none" stroke-width="1"/></svg>
<div class="t" style="left:1256.5px;top:95.5px;font-size:11px;color:#1c2c4c;line-height:12px;">&#215;</div>
<div style="left:1161.5px;top:108px;width:104.5px;height:16.5px;background:#f1f1f1;border-left:1px solid #a5b3c7;border-right:1px solid #a5b3c7;"></div>
<div style="left:1162.5px;top:110px;width:14px;height:11px;background:#e4e8ee;border:1px solid #5a6474;border-radius:2px;"></div>
<div style="left:1165px;top:112.5px;width:2px;height:2px;background:#333;"></div><div style="left:1168px;top:113px;width:7px;height:1px;background:#555;"></div><div style="left:1165px;top:116.5px;width:2px;height:2px;background:#333;"></div><div style="left:1168px;top:117px;width:7px;height:1px;background:#555;"></div>
<div style="left:1180px;top:111px;width:2px;height:2px;background:#333;"></div><div style="left:1183px;top:112px;width:5px;height:7px;background:#d5dae3;border:1px solid #b2bac8;"></div>
<div style="left:1194px;top:111px;width:2px;height:1.5px;background:#333;"></div><div style="left:1197px;top:111px;width:7px;height:1px;background:#777;"></div><div style="left:1194px;top:114.5px;width:2px;height:1.5px;background:#333;"></div><div style="left:1197px;top:114.5px;width:7px;height:1px;background:#777;"></div><div style="left:1194px;top:118px;width:2px;height:1.5px;background:#333;"></div><div style="left:1197px;top:118px;width:7px;height:1px;background:#777;"></div>
<div style="left:1161.5px;top:124.5px;width:104.5px;height:439px;background:#fff;border:1px solid #a9b2c0;"></div>
<div style="left:1162.5px;top:137.13000000000002px;width:5.5px;height:294.84px;background:#f0f0f0;"></div>
<div style="left:1164px;top:127.49999999999999px;width:7.4px;height:7.4px;background:#fff;border:1px solid #8a94a6;"></div>
<svg style="left:1165px;top:128.2px" width="6" height="6"><path d="M.8,3 L2.4,5 L5.2,.8" stroke="#2a3f7a" stroke-width="1.2" fill="none"/></svg>
<div class="t" style="left:1175.5px;top:126.19999999999999px;font-size:7.2px;color:#222;">Active</div>
<div style="left:1162.5px;top:137.13000000000002px;width:102.5px;height:11.34px;background:#f0f0f0;"></div>
<svg style="left:1167px;top:140.8px" width="5" height="5"><polygon points="0,4.5 4.5,4.5 4.5,0" fill="#444"/></svg>
<div class="t" style="left:1174.5px;top:137.8px;font-size:7.7px;font-weight:bold;color:#111;">Common</div>
<div style="left:1162.5px;top:159.31000000000003px;width:102.5px;height:1px;background:#f1f1f1;"></div>
<div style="left:1214.5px;top:148.47000000000003px;width:1px;height:11.34px;background:#f1f1f1;"></div>
<div class="t" style="left:1179px;top:149.14000000000001px;font-size:7.2px;color:#222;width:35.5px;overflow:hidden;">Name</div>
<div class="t" style="left:1216px;top:149.14000000000001px;font-size:7.2px;color:#222;width:49px;overflow:hidden;">Slider_1</div>
<div style="left:1162.5px;top:170.65000000000003px;width:102.5px;height:1px;background:#f1f1f1;"></div>
<div style="left:1214.5px;top:159.81000000000003px;width:1px;height:11.34px;background:#f1f1f1;"></div>
<div class="t" style="left:1179px;top:160.48000000000002px;font-size:7.2px;color:#222;width:35.5px;overflow:hidden;">Use custor</div>
<div style="left:1216px;top:161.78000000000003px;width:7.4px;height:7.4px;background:linear-gradient(135deg,#dcdcdc,#fafafa);border:1px solid #8e8f8f;"></div>
<div style="left:1162.5px;top:181.99px;width:102.5px;height:1px;background:#f1f1f1;"></div>
<div style="left:1214.5px;top:171.15px;width:1px;height:11.34px;background:#f1f1f1;"></div>
<div class="t" style="left:1179px;top:171.82px;font-size:7.2px;color:#222;width:35.5px;overflow:hidden;">Use custor</div>
<div style="left:1216px;top:173.12px;width:7.4px;height:7.4px;background:linear-gradient(135deg,#dcdcdc,#fafafa);border:1px solid #8e8f8f;"></div>
<div style="left:1162.5px;top:193.33000000000004px;width:102.5px;height:1px;background:#f1f1f1;"></div>
<div style="left:1214.5px;top:182.49000000000004px;width:1px;height:11.34px;background:#f1f1f1;"></div>
<div class="t" style="left:1179px;top:183.16000000000003px;font-size:7.2px;color:#222;width:35.5px;overflow:hidden;">Selection b</div>
<div class="t" style="left:1216px;top:183.16000000000003px;font-size:7.2px;color:#222;width:49px;overflow:hidden;">Use global</div>
<svg style="left:1256px;top:186.66000000000003px" width="6" height="4"><polygon points="0,0 5.5,0 2.75,3" fill="#111"/></svg>
<div style="left:1162.5px;top:204.67000000000002px;width:102.5px;height:1px;background:#f1f1f1;"></div>
<div style="left:1214.5px;top:193.83px;width:1px;height:11.34px;background:#f1f1f1;"></div>
<div class="t" style="left:1179px;top:194.5px;font-size:7.2px;color:#222;width:35.5px;overflow:hidden;">Border</div>
<svg style="left:1173px;top:196.5px" width="4" height="6"><polygon points=".5,.5 3.5,3 .5,5.5" fill="#fff" stroke="#999" stroke-width=".7"/></svg>
<div style="left:1162.5px;top:216.01000000000002px;width:102.5px;height:1px;background:#f1f1f1;"></div>
<div style="left:1214.5px;top:205.17000000000002px;width:1px;height:11.34px;background:#f1f1f1;"></div>
<div class="t" style="left:1179px;top:205.84px;font-size:7.2px;color:#222;width:35.5px;overflow:hidden;">Backgroun</div>
<svg style="left:1173px;top:207.84px" width="4" height="6"><polygon points=".5,.5 3.5,3 .5,5.5" fill="#fff" stroke="#999" stroke-width=".7"/></svg>
<div style="left:1162.5px;top:227.35000000000002px;width:102.5px;height:1px;background:#f1f1f1;"></div>
<div style="left:1214.5px;top:216.51000000000002px;width:1px;height:11.34px;background:#f1f1f1;"></div>
<div class="t" style="left:1179px;top:217.18px;font-size:7.2px;color:#222;width:35.5px;overflow:hidden;">Captions/C</div>
<div style="left:1254px;top:217.68px;width:9.5px;height:9px;background:linear-gradient(#f6f6f6,#dedede);border:1px solid #8a8a8a;border-radius:2px;"></div>
<div class="t" style="left:1255.5px;top:217.68px;font-size:6px;color:#222;line-height:8px;">...</div>
<div style="left:1162.5px;top:238.69000000000003px;width:102.5px;height:1px;background:#f1f1f1;"></div>
<div style="left:1214.5px;top:227.85000000000002px;width:1px;height:11.34px;background:#f1f1f1;"></div>
<div class="t" style="left:1179px;top:228.52px;font-size:7.2px;color:#222;width:35.5px;overflow:hidden;">Size and p</div>
<svg style="left:1173px;top:230.52px" width="4" height="6"><polygon points=".5,.5 3.5,3 .5,5.5" fill="#fff" stroke="#999" stroke-width=".7"/></svg>
<div style="left:1162.5px;top:239.19000000000003px;width:102.5px;height:11.34px;background:#f0f0f0;"></div>
<svg style="left:1167px;top:242.86px" width="5" height="5"><polygon points="0,4.5 4.5,4.5 4.5,0" fill="#444"/></svg>
<div class="t" style="left:1174.5px;top:239.86px;font-size:7.7px;font-weight:bold;color:#111;">Slider</div>
<div style="left:1162.5px;top:261.37000000000006px;width:102.5px;height:1px;background:#f1f1f1;"></div>
<div style="left:1214.5px;top:250.53000000000006px;width:1px;height:11.34px;background:#f1f1f1;"></div>
<div class="t" style="left:1179px;top:251.20000000000005px;font-size:7.2px;color:#222;width:35.5px;overflow:hidden;">Range</div>
<svg style="left:1173px;top:253.20000000000005px" width="4" height="6"><polygon points=".5,.5 3.5,3 .5,5.5" fill="#fff" stroke="#999" stroke-width=".7"/></svg>
<div style="left:1162.5px;top:272.71px;width:102.5px;height:1px;background:#f1f1f1;"></div>
<div style="left:1214.5px;top:261.87px;width:1px;height:11.34px;background:#f1f1f1;"></div>
<div class="t" style="left:1179px;top:262.54px;font-size:7.2px;color:#222;width:35.5px;overflow:hidden;">Automatic :</div>
<div style="left:1216px;top:263.84000000000003px;width:7.4px;height:7.4px;background:linear-gradient(135deg,#dcdcdc,#fafafa);border:1px solid #8e8f8f;"></div>
<svg style="left:1217px;top:264.54px" width="6" height="6"><path d="M.8,3 L2.4,5 L5.2,.8" stroke="#2a3f7a" stroke-width="1.2" fill="none"/></svg>
<div style="left:1162.5px;top:284.04999999999995px;width:102.5px;height:1px;background:#f1f1f1;"></div>
<div style="left:1214.5px;top:273.21px;width:1px;height:11.34px;background:#f1f1f1;"></div>
<div class="t" style="left:1179px;top:273.88px;font-size:7.2px;color:#222;width:35.5px;overflow:hidden;">Overflow w</div>
<div style="left:1216px;top:275.18px;width:7.4px;height:7.4px;background:linear-gradient(135deg,#dcdcdc,#fafafa);border:1px solid #8e8f8f;"></div>
<div style="left:1162.5px;top:295.39px;width:102.5px;height:1px;background:#f1f1f1;"></div>
<div style="left:1214.5px;top:284.55px;width:1px;height:11.34px;background:#f1f1f1;"></div>
<div class="t" style="left:1179px;top:285.22px;font-size:7.2px;color:#222;width:35.5px;overflow:hidden;">Bands</div>
<div style="left:1254px;top:285.72px;width:9.5px;height:9px;background:linear-gradient(#f6f6f6,#dedede);border:1px solid #8a8a8a;border-radius:2px;"></div>
<div class="t" style="left:1255.5px;top:285.72px;font-size:6px;color:#222;line-height:8px;">...</div>
<div style="left:1162.5px;top:306.72999999999996px;width:102.5px;height:1px;background:#f1f1f1;"></div>
<div style="left:1214.5px;top:295.89px;width:1px;height:11.34px;background:#f1f1f1;"></div>
<div class="t" style="left:1179px;top:296.56px;font-size:7.2px;color:#222;width:35.5px;overflow:hidden;">Scale</div>
<svg style="left:1173px;top:298.56px" width="4" height="6"><polygon points=".5,.5 3.5,3 .5,5.5" fill="#fff" stroke="#999" stroke-width=".7"/></svg>
<div style="left:1162.5px;top:318.06999999999994px;width:102.5px;height:1px;background:#f1f1f1;"></div>
<div style="left:1214.5px;top:307.22999999999996px;width:1px;height:11.34px;background:#f1f1f1;"></div>
<div class="t" style="left:1179px;top:307.9px;font-size:7.2px;color:#222;width:35.5px;overflow:hidden;">Slide</div>
<svg style="left:1173px;top:309.9px" width="4" height="6"><polygon points=".5,.5 3.5,3 .5,5.5" fill="#fff" stroke="#999" stroke-width=".7"/></svg>
<div style="left:1162.5px;top:329.40999999999997px;width:102.5px;height:1px;background:#f1f1f1;"></div>
<div style="left:1214.5px;top:318.57px;width:1px;height:11.34px;background:#f1f1f1;"></div>
<div class="t" style="left:1179px;top:319.24px;font-size:7.2px;color:#222;width:35.5px;overflow:hidden;">Slidebar</div>
<svg style="left:1173px;top:321.24px" width="4" height="6"><polygon points=".5,.5 3.5,3 .5,5.5" fill="#fff" stroke="#999" stroke-width=".7"/></svg>
<div style="left:1162.5px;top:340.75px;width:102.5px;height:1px;background:#f1f1f1;"></div>
<div style="left:1214.5px;top:329.91px;width:1px;height:11.34px;background:#f1f1f1;"></div>
<div class="t" style="left:1179px;top:330.58000000000004px;font-size:7.2px;color:#222;width:35.5px;overflow:hidden;">Range che</div>
<svg style="left:1173px;top:332.58000000000004px" width="4" height="6"><polygon points=".5,.5 3.5,3 .5,5.5" fill="#fff" stroke="#999" stroke-width=".7"/></svg>
<div style="left:1162.5px;top:341.25px;width:102.5px;height:11.34px;background:#f0f0f0;"></div>
<svg style="left:1167px;top:344.92px" width="5" height="5"><polygon points="0,4.5 4.5,4.5 4.5,0" fill="#444"/></svg>
<div class="t" style="left:1174.5px;top:341.92px;font-size:7.7px;font-weight:bold;color:#111;">Variables</div>
<div style="left:1162.5px;top:363.42999999999995px;width:102.5px;height:1px;background:#f1f1f1;"></div>
<div style="left:1214.5px;top:352.59px;width:1px;height:11.34px;background:#f1f1f1;"></div>
<div class="t" style="left:1179px;top:353.26px;font-size:7.2px;color:#222;width:35.5px;overflow:hidden;">Platform/D</div>
<div class="t" style="left:1216px;top:353.26px;font-size:7.2px;color:#8a8a8a;width:49px;overflow:hidden;">Platform</div>
<div style="left:1162.5px;top:374.77px;width:102.5px;height:1px;background:#f1f1f1;"></div>
<div style="left:1214.5px;top:363.93px;width:1px;height:11.34px;background:#f1f1f1;"></div>
<div class="t" style="left:1179px;top:364.6px;font-size:7.2px;color:#222;width:35.5px;overflow:hidden;">Path</div>
<div class="t" style="left:1216px;top:364.6px;font-size:7.2px;color:#8a8a8a;width:49px;overflow:hidden;">Model Root/Sc</div>
<div style="left:1162.5px;top:386.10999999999996px;width:102.5px;height:1px;background:#f1f1f1;"></div>
<div style="left:1214.5px;top:375.27px;width:1px;height:11.34px;background:#f1f1f1;"></div>
<div class="t" style="left:1179px;top:375.94px;font-size:7.2px;color:#222;width:35.5px;overflow:hidden;">Variable na</div>
<div class="t" style="left:1216px;top:375.94px;font-size:7.2px;color:#8a8a8a;width:49px;overflow:hidden;">Value</div>
<div style="left:1162.5px;top:397.44999999999993px;width:102.5px;height:1px;background:#f1f1f1;"></div>
<div style="left:1214.5px;top:386.60999999999996px;width:1px;height:11.34px;background:#f1f1f1;"></div>
<div class="t" style="left:1179px;top:387.28px;font-size:7.2px;color:#222;width:35.5px;overflow:hidden;">WriteMode</div>
<div class="t" style="left:1216px;top:387.28px;font-size:7.2px;color:#222;width:49px;overflow:hidden;">Automatic</div>
<svg style="left:1256px;top:390.78px" width="6" height="4"><polygon points="0,0 5.5,0 2.75,3" fill="#111"/></svg>
<div style="left:1162.5px;top:408.78999999999996px;width:102.5px;height:1px;background:#f1f1f1;"></div>
<div style="left:1214.5px;top:397.95px;width:1px;height:11.34px;background:#f1f1f1;"></div>
<div class="t" style="left:1179px;top:398.62px;font-size:7.2px;color:#222;width:35.5px;overflow:hidden;">Increments</div>
<svg style="left:1173px;top:400.62px" width="4" height="6"><polygon points=".5,.5 3.5,3 .5,5.5" fill="#fff" stroke="#999" stroke-width=".7"/></svg>
<div style="left:1162.5px;top:420.12999999999994px;width:102.5px;height:1px;background:#f1f1f1;"></div>
<div style="left:1214.5px;top:409.28999999999996px;width:1px;height:11.34px;background:#f1f1f1;"></div>
<div class="t" style="left:1179px;top:409.96px;font-size:7.2px;color:#222;width:35.5px;overflow:hidden;">Additional v</div>
<div class="t" style="left:1216px;top:409.96px;font-size:7.2px;color:#222;width:37px;overflow:hidden;">no connectio</div>
<div style="left:1254px;top:410.46px;width:9.5px;height:9px;background:linear-gradient(#f6f6f6,#dedede);border:1px solid #8a8a8a;border-radius:2px;"></div>
<div class="t" style="left:1255.5px;top:410.46px;font-size:6px;color:#222;line-height:8px;">...</div>
<div style="left:1162.5px;top:431.46999999999997px;width:102.5px;height:1px;background:#f1f1f1;"></div>
<div style="left:1214.5px;top:420.63px;width:1px;height:11.34px;background:#f1f1f1;"></div>
<div class="t" style="left:1179px;top:421.3px;font-size:7.2px;color:#222;width:35.5px;overflow:hidden;">Custom val</div>
<svg style="left:1173px;top:423.3px" width="4" height="6"><polygon points=".5,.5 3.5,3 .5,5.5" fill="#fff" stroke="#999" stroke-width=".7"/></svg>
<div style="left:1161.5px;top:566px;width:104.5px;height:55.5px;background:#efefef;border:1px solid #a9b2c0;"></div>
<svg style="left:1254px;top:584.5px" width="6" height="4"><polygon points="0,3 5.5,3 2.75,0" fill="#777"/></svg>
<svg style="left:1254px;top:611px" width="6" height="4"><polygon points="0,0 5.5,0 2.75,3" fill="#777"/></svg>
<div style="left:1266.5px;top:95px;width:13.5px;height:663px;background:#f3f4f6;"></div>
<div style="left:1267.5px;top:97px;width:12.5px;height:89px;background:linear-gradient(to right,#fdfdfe,#eef2f8);border:1px solid #b7c4d6;border-right:none;border-radius:2px 0 0 2px;"></div>
<div style="left:1270px;top:99.5px;width:8px;height:8px;border-radius:4px;background:radial-gradient(#ffe9a0,#e0a020);border:1px solid #8a7a9a;"></div>
<div class="t" style="left:1279px;top:111px;transform-origin:0 0;transform:rotate(90deg);color:#555;font-size:8px;">Instrument Selector</div>
<div style="left:14px;top:625.5px;width:1252px;height:13px;background:linear-gradient(#bccadd,#afbfd6);border:1px solid #a4b4cb;"></div>
<div class="t" style="left:17px;top:627px;font-size:8.3px;color:#4a5a75;">Variables</div>
<svg style="left:1235px;top:630.5px" width="7" height="4"><polygon points="0,0 6,0 3,3.5" fill="#1c2c4c"/></svg>
<svg style="left:1247px;top:627px" width="6" height="9"><path d="M1.5,0.5 h3 v4 h-3 z M0,4.8 h6 M3,5 v3.5" stroke="#1c2c4c" fill="none" stroke-width="1"/></svg>
<div class="t" style="left:1256.5px;top:625.5px;font-size:11px;color:#1c2c4c;line-height:12px;">&#215;</div>
<div style="left:14px;top:638.5px;width:1252px;height:104px;background:#e9edf3;"></div>
<div style="left:15px;top:639px;width:247px;height:103.2px;background:#fff;border:1px solid #7f8792;"></div>
<div style="left:19px;top:643px;width:5px;height:5px;border:1px solid #a6b2c4;background:#fff;"></div><div style="left:20px;top:645px;width:3px;height:1px;background:#4a5a78;"></div><div style="left:21px;top:644px;width:1px;height:3px;background:#4a5a78;"></div>
<div style="left:30px;top:641.5px;width:10px;height:8px;background:#e8ecf4;border:1px solid #6c7c9c;"></div>
<div class="t" style="left:31.5px;top:641px;font-size:5px;color:#233;line-height:8px;font-weight:bold;">ab</div>
<div class="t" style="left:44px;top:640.5px;font-size:7.7px;color:#111;">ansteuerungachse.sdf</div>
<div style="left:265px;top:639px;width:739px;height:103.2px;background:#fff;border:1px solid #7f8792;"></div>
<div style="left:266px;top:640px;width:737px;height:12px;background:linear-gradient(#fff,#f5f5f5);border-bottom:1px solid #dedede;"></div>
<div class="t" style="left:270px;top:642.5px;font-size:7.7px;color:#111;">Var...</div>
<div class="t" style="left:296.5px;top:642.5px;font-size:7.7px;color:#111;">C</div>
<div class="t" style="left:310px;top:642.5px;font-size:7.7px;color:#111;">Variable</div>
<div class="t" style="left:408.5px;top:642.5px;font-size:7.7px;color:#111;">Block</div>
<div class="t" style="left:501.5px;top:642.5px;font-size:7.7px;color:#111;">Platform/Device</div>
<div class="t" style="left:583.5px;top:642.5px;font-size:7.7px;color:#111;">Description</div>
<div class="t" style="left:740px;top:642.5px;font-size:7.7px;color:#111;">Unit</div>
<div class="t" style="left:780px;top:642.5px;font-size:7.7px;color:#111;">Type</div>
<div class="t" style="left:347px;top:642.5px;font-size:6px;color:#555;">&#8260;</div>
<div style="left:292.5px;top:641px;width:1px;height:100.2px;background:#f1f1f1;"></div>
<div style="left:305px;top:641px;width:1px;height:100.2px;background:#f1f1f1;"></div>
<div style="left:404px;top:641px;width:1px;height:100.2px;background:#f1f1f1;"></div>
<div style="left:497.5px;top:641px;width:1px;height:100.2px;background:#f1f1f1;"></div>
<div style="left:580px;top:641px;width:1px;height:100.2px;background:#f1f1f1;"></div>
<div style="left:736px;top:641px;width:1px;height:100.2px;background:#f1f1f1;"></div>
<div style="left:776px;top:641px;width:1px;height:100.2px;background:#f1f1f1;"></div>
<div style="left:842.5px;top:641px;width:1px;height:100.2px;background:#f1f1f1;"></div>
<div style="left:266px;top:667.8px;width:737px;height:1px;background:#f3f3f3;"></div>
<div style="left:270px;top:658.3px;width:7.4px;height:7.4px;background:linear-gradient(135deg,#dcdcdc,#fafafa);border:1px solid #8e8f8f;"></div>
<div style="left:280.5px;top:659.0px;width:5px;height:6px;border:1.2px solid #2a3a6a;background:#dfe6f5;"></div>
<svg style="left:285px;top:660.0px" width="5" height="4"><path d="M0,2 h3 M2.5,0 L4.5,2 L2.5,4 z" stroke="#1c2c5c" fill="#1c2c5c" stroke-width=".8"/></svg>
<div class="t" style="left:310px;top:657.0px;font-size:7.7px;color:#111;">currentTime</div>
<div class="t" style="left:501.5px;top:657.0px;font-size:7.7px;color:#111;">Platform</div>
<div class="t" style="left:583.5px;top:657.0px;font-size:7.7px;color:#111;width:151px;overflow:hidden;">Current simulation time. Increments wit...</div>
<div class="t" style="left:740px;top:657.0px;font-size:7.7px;color:#111;">s</div>
<div class="t" style="left:780px;top:657.0px;font-size:7.7px;color:#111;">Double 64 bit</div>
<div style="left:266px;top:668.3000000000001px;width:577px;height:12.6px;background:#f0f0f0;"></div>
<div style="left:292.5px;top:668.3000000000001px;width:1px;height:12.6px;background:#fafafa;"></div>
<div style="left:305px;top:668.3000000000001px;width:1px;height:12.6px;background:#fafafa;"></div>
<div style="left:404px;top:668.3000000000001px;width:1px;height:12.6px;background:#fafafa;"></div>
<div style="left:497.5px;top:668.3000000000001px;width:1px;height:12.6px;background:#fafafa;"></div>
<div style="left:580px;top:668.3000000000001px;width:1px;height:12.6px;background:#fafafa;"></div>
<div style="left:736px;top:668.3000000000001px;width:1px;height:12.6px;background:#fafafa;"></div>
<div style="left:776px;top:668.3000000000001px;width:1px;height:12.6px;background:#fafafa;"></div>
<div style="left:270px;top:670.9px;width:7.4px;height:7.4px;background:linear-gradient(135deg,#dcdcdc,#fafafa);border:1px solid #8e8f8f;"></div>
<div style="left:280.5px;top:671.6px;width:5px;height:6px;border:1.2px solid #2a3a6a;background:#dfe6f5;"></div>
<svg style="left:285px;top:672.6px" width="5" height="4"><path d="M0,2 h3 M2.5,0 L4.5,2 L2.5,4 z" stroke="#1c2c5c" fill="#1c2c5c" stroke-width=".8"/></svg>
<div class="t" style="left:310px;top:669.6px;font-size:7.7px;color:#111;">errorNumber</div>
<div class="t" style="left:501.5px;top:669.6px;font-size:7.7px;color:#111;">Platform</div>
<div class="t" style="left:583.5px;top:669.6px;font-size:7.7px;color:#111;width:151px;overflow:hidden;">Error number of last error message (zero...</div>
<div class="t" style="left:740px;top:669.6px;font-size:7.7px;color:#111;">-</div>
<div class="t" style="left:780px;top:669.6px;font-size:7.7px;color:#111;">Unsigned 32 bit</div>
<div style="left:266px;top:693.0px;width:737px;height:1px;background:#f3f3f3;"></div>
<div style="left:270px;top:683.5px;width:7.4px;height:7.4px;background:linear-gradient(135deg,#dcdcdc,#fafafa);border:1px solid #8e8f8f;"></div>
<div style="left:280.5px;top:684.2px;width:5px;height:6px;border:1.2px solid #2a3a6a;background:#dfe6f5;"></div>
<svg style="left:285px;top:685.2px" width="5" height="4"><path d="M0,2 h3 M2.5,0 L4.5,2 L2.5,4 z" stroke="#1c2c5c" fill="#1c2c5c" stroke-width=".8"/></svg>
<div class="t" style="left:310px;top:682.2px;font-size:7.7px;color:#111;">finalTime</div>
<div class="t" style="left:501.5px;top:682.2px;font-size:7.7px;color:#111;">Platform</div>
<div class="t" style="left:583.5px;top:682.2px;font-size:7.7px;color:#111;width:151px;overflow:hidden;">Simulation stop time. When reached, si...</div>
<div class="t" style="left:740px;top:682.2px;font-size:7.7px;color:#111;">s</div>
<div class="t" style="left:780px;top:682.2px;font-size:7.7px;color:#111;">Double 64 bit</div>
<div style="left:266px;top:693.5px;width:577px;height:12.6px;background:#f0f0f0;"></div>
<div style="left:292.5px;top:693.5px;width:1px;height:12.6px;background:#fafafa;"></div>
<div style="left:305px;top:693.5px;width:1px;height:12.6px;background:#fafafa;"></div>
<div style="left:404px;top:693.5px;width:1px;height:12.6px;background:#fafafa;"></div>
<div style="left:497.5px;top:693.5px;width:1px;height:12.6px;background:#fafafa;"></div>
<div style="left:580px;top:693.5px;width:1px;height:12.6px;background:#fafafa;"></div>
<div style="left:736px;top:693.5px;width:1px;height:12.6px;background:#fafafa;"></div>
<div style="left:776px;top:693.5px;width:1px;height:12.6px;background:#fafafa;"></div>
<div style="left:270px;top:696.0999999999999px;width:7.4px;height:7.4px;background:linear-gradient(135deg,#dcdcdc,#fafafa);border:1px solid #8e8f8f;"></div>
<div style="left:280.5px;top:696.8px;width:5px;height:6px;border:1.2px solid #2a3a6a;background:#dfe6f5;"></div>
<svg style="left:285px;top:697.8px" width="5" height="4"><path d="M0,2 h3 M2.5,0 L4.5,2 L2.5,4 z" stroke="#1c2c5c" fill="#1c2c5c" stroke-width=".8"/></svg>
<div class="t" style="left:310px;top:694.8px;font-size:7.7px;color:#111;">modelStepSize</div>
<div class="t" style="left:501.5px;top:694.8px;font-size:7.7px;color:#111;">Platform</div>
<div class="t" style="left:583.5px;top:694.8px;font-size:7.7px;color:#111;width:151px;overflow:hidden;">Fixed step size of the model, sample tim...</div>
<div class="t" style="left:740px;top:694.8px;font-size:7.7px;color:#111;">s</div>
<div class="t" style="left:780px;top:694.8px;font-size:7.7px;color:#111;">Double 64 bit</div>
<div style="left:266px;top:718.1999999999999px;width:737px;height:1px;background:#f3f3f3;"></div>
<div style="left:270px;top:708.6999999999999px;width:7.4px;height:7.4px;background:linear-gradient(135deg,#dcdcdc,#fafafa);border:1px solid #8e8f8f;"></div>
<div style="left:280.5px;top:708.6999999999999px;width:7.4px;height:7.4px;border:1px solid #222;background:#fff;"></div>
<div class="t" style="left:282.3px;top:707.8px;font-size:6px;font-weight:bold;color:#111;line-height:9px;">P</div>
<div class="t" style="left:310px;top:707.4px;font-size:7.7px;color:#111;">rtiAssertionMode</div>
<div class="t" style="left:501.5px;top:707.4px;font-size:7.7px;color:#111;">Platform</div>
<div class="t" style="left:583.5px;top:707.4px;font-size:7.7px;color:#111;width:151px;overflow:hidden;">Assertion Mode: OFF=0 WARN=1 STOP=2</div>
<div class="t" style="left:740px;top:707.4px;font-size:7.7px;color:#111;">-</div>
<div class="t" style="left:780px;top:707.4px;font-size:7.7px;color:#111;">Signed 32 bit</div>
<div style="left:266px;top:718.7px;width:577px;height:12.6px;background:#f0f0f0;"></div>
<div style="left:292.5px;top:718.7px;width:1px;height:12.6px;background:#fafafa;"></div>
<div style="left:305px;top:718.7px;width:1px;height:12.6px;background:#fafafa;"></div>
<div style="left:404px;top:718.7px;width:1px;height:12.6px;background:#fafafa;"></div>
<div style="left:497.5px;top:718.7px;width:1px;height:12.6px;background:#fafafa;"></div>
<div style="left:580px;top:718.7px;width:1px;height:12.6px;background:#fafafa;"></div>
<div style="left:736px;top:718.7px;width:1px;height:12.6px;background:#fafafa;"></div>
<div style="left:776px;top:718.7px;width:1px;height:12.6px;background:#fafafa;"></div>
<div style="left:270px;top:721.3px;width:7.4px;height:7.4px;background:linear-gradient(135deg,#dcdcdc,#fafafa);border:1px solid #8e8f8f;"></div>
<div style="left:280.5px;top:721.3px;width:7.4px;height:7.4px;border:1px solid #222;background:#fff;"></div>
<div class="t" style="left:282.3px;top:720.4px;font-size:6px;font-weight:bold;color:#111;line-height:9px;">P</div>
<div class="t" style="left:310px;top:720.0px;font-size:7.7px;color:#111;">simState</div>
<div class="t" style="left:501.5px;top:720.0px;font-size:7.7px;color:#111;">Platform</div>
<div class="t" style="left:583.5px;top:720.0px;font-size:7.7px;color:#111;width:151px;overflow:hidden;">Simulation state: STOP=0 PAUSE=1 RUN...</div>
<div class="t" style="left:740px;top:720.0px;font-size:7.7px;color:#111;">-</div>
<div class="t" style="left:780px;top:720.0px;font-size:7.7px;color:#111;">Signed 32 bit</div>
<div style="left:266px;top:743.4px;width:737px;height:1px;background:#f3f3f3;"></div>
<div style="left:1008px;top:639px;width:257.5px;height:103.2px;background:#fff;border:1px solid #7f8792;"></div>
<div style="left:1009px;top:640px;width:255.5px;height:12px;background:linear-gradient(#fff,#f5f5f5);border-bottom:1px solid #dedede;"></div>
<div class="t" style="left:1013.5px;top:642.5px;font-size:7.7px;color:#111;">Checked Variables</div>
<div style="left:1009px;top:667.8px;width:255.5px;height:1px;background:#f3f3f3;"></div>
<div style="left:1009px;top:680.4px;width:255.5px;height:1px;background:#f3f3f3;"></div>
<div style="left:1009px;top:693.0px;width:255.5px;height:1px;background:#f3f3f3;"></div>
<div style="left:1009px;top:705.5999999999999px;width:255.5px;height:1px;background:#f3f3f3;"></div>
<div style="left:1009px;top:718.1999999999999px;width:255.5px;height:1px;background:#f3f3f3;"></div>
<div style="left:1009px;top:730.8px;width:255.5px;height:1px;background:#f3f3f3;"></div>
<div style="left:1009px;top:743.4px;width:255.5px;height:1px;background:#f3f3f3;"></div>
<div style="left:0px;top:742.5px;width:1266.5px;height:15.5px;background:#f0f1f3;"></div>
<div style="left:15.5px;top:742px;width:50.5px;height:15.3px;background:#fff;border:1px solid #8a94a4;border-top:none;border-radius:0 0 2px 2px;"></div>
<div class="t" style="left:32px;top:745.5px;font-size:7.7px;color:#111;">Variables</div>
<div class="t" style="left:82px;top:745.5px;font-size:7.7px;color:#555;">Measurement Data Pool</div>
<div class="t" style="left:185.5px;top:745.5px;font-size:7.7px;color:#555;">Platform/Device</div>
<div class="t" style="left:261px;top:745.5px;font-size:7.7px;color:#555;">Interpreter</div>
<div class="t" style="left:316.5px;top:745.5px;font-size:7.7px;color:#555;">Log</div>
<div style="left:68px;top:745px;width:1px;height:10px;background:#a9b0bc;"></div>
<div style="left:170px;top:745px;width:1px;height:10px;background:#a9b0bc;"></div>
<div style="left:246px;top:745px;width:1px;height:10px;background:#a9b0bc;"></div>
<div style="left:301px;top:745px;width:1px;height:10px;background:#a9b0bc;"></div>
<div style="left:19.5px;top:745.5px;width:9px;height:9px;border-radius:5px;background:radial-gradient(#e8eef8,#8fa6cc);border:1px solid #5a6f98;"></div>
<div style="left:70.5px;top:745.5px;width:8px;height:9px;background:#dbe9f7;border:1px solid #4a78b8;"></div><div style="left:72.5px;top:749px;width:5px;height:5px;background:#5aa05a;border-radius:3px;"></div>
<div style="left:172.5px;top:747px;width:10px;height:6px;background:#5d9a5d;border:1px solid #555e6c;"></div><div style="left:177px;top:748px;width:4px;height:3px;background:#cfe6cf;"></div>
<div style="left:248.5px;top:745.5px;width:5px;height:5px;background:#3a6ab0;border-radius:2px;"></div><div style="left:252px;top:749px;width:5px;height:5px;background:#e8c030;border-radius:2px;"></div>
<div style="left:304px;top:745.5px;width:8px;height:9px;background:#f4f6fa;border:1px solid #5a78b0;"></div><div style="left:308px;top:750px;width:5px;height:5px;border-radius:3px;background:#d03030;"></div></div></body></html>
